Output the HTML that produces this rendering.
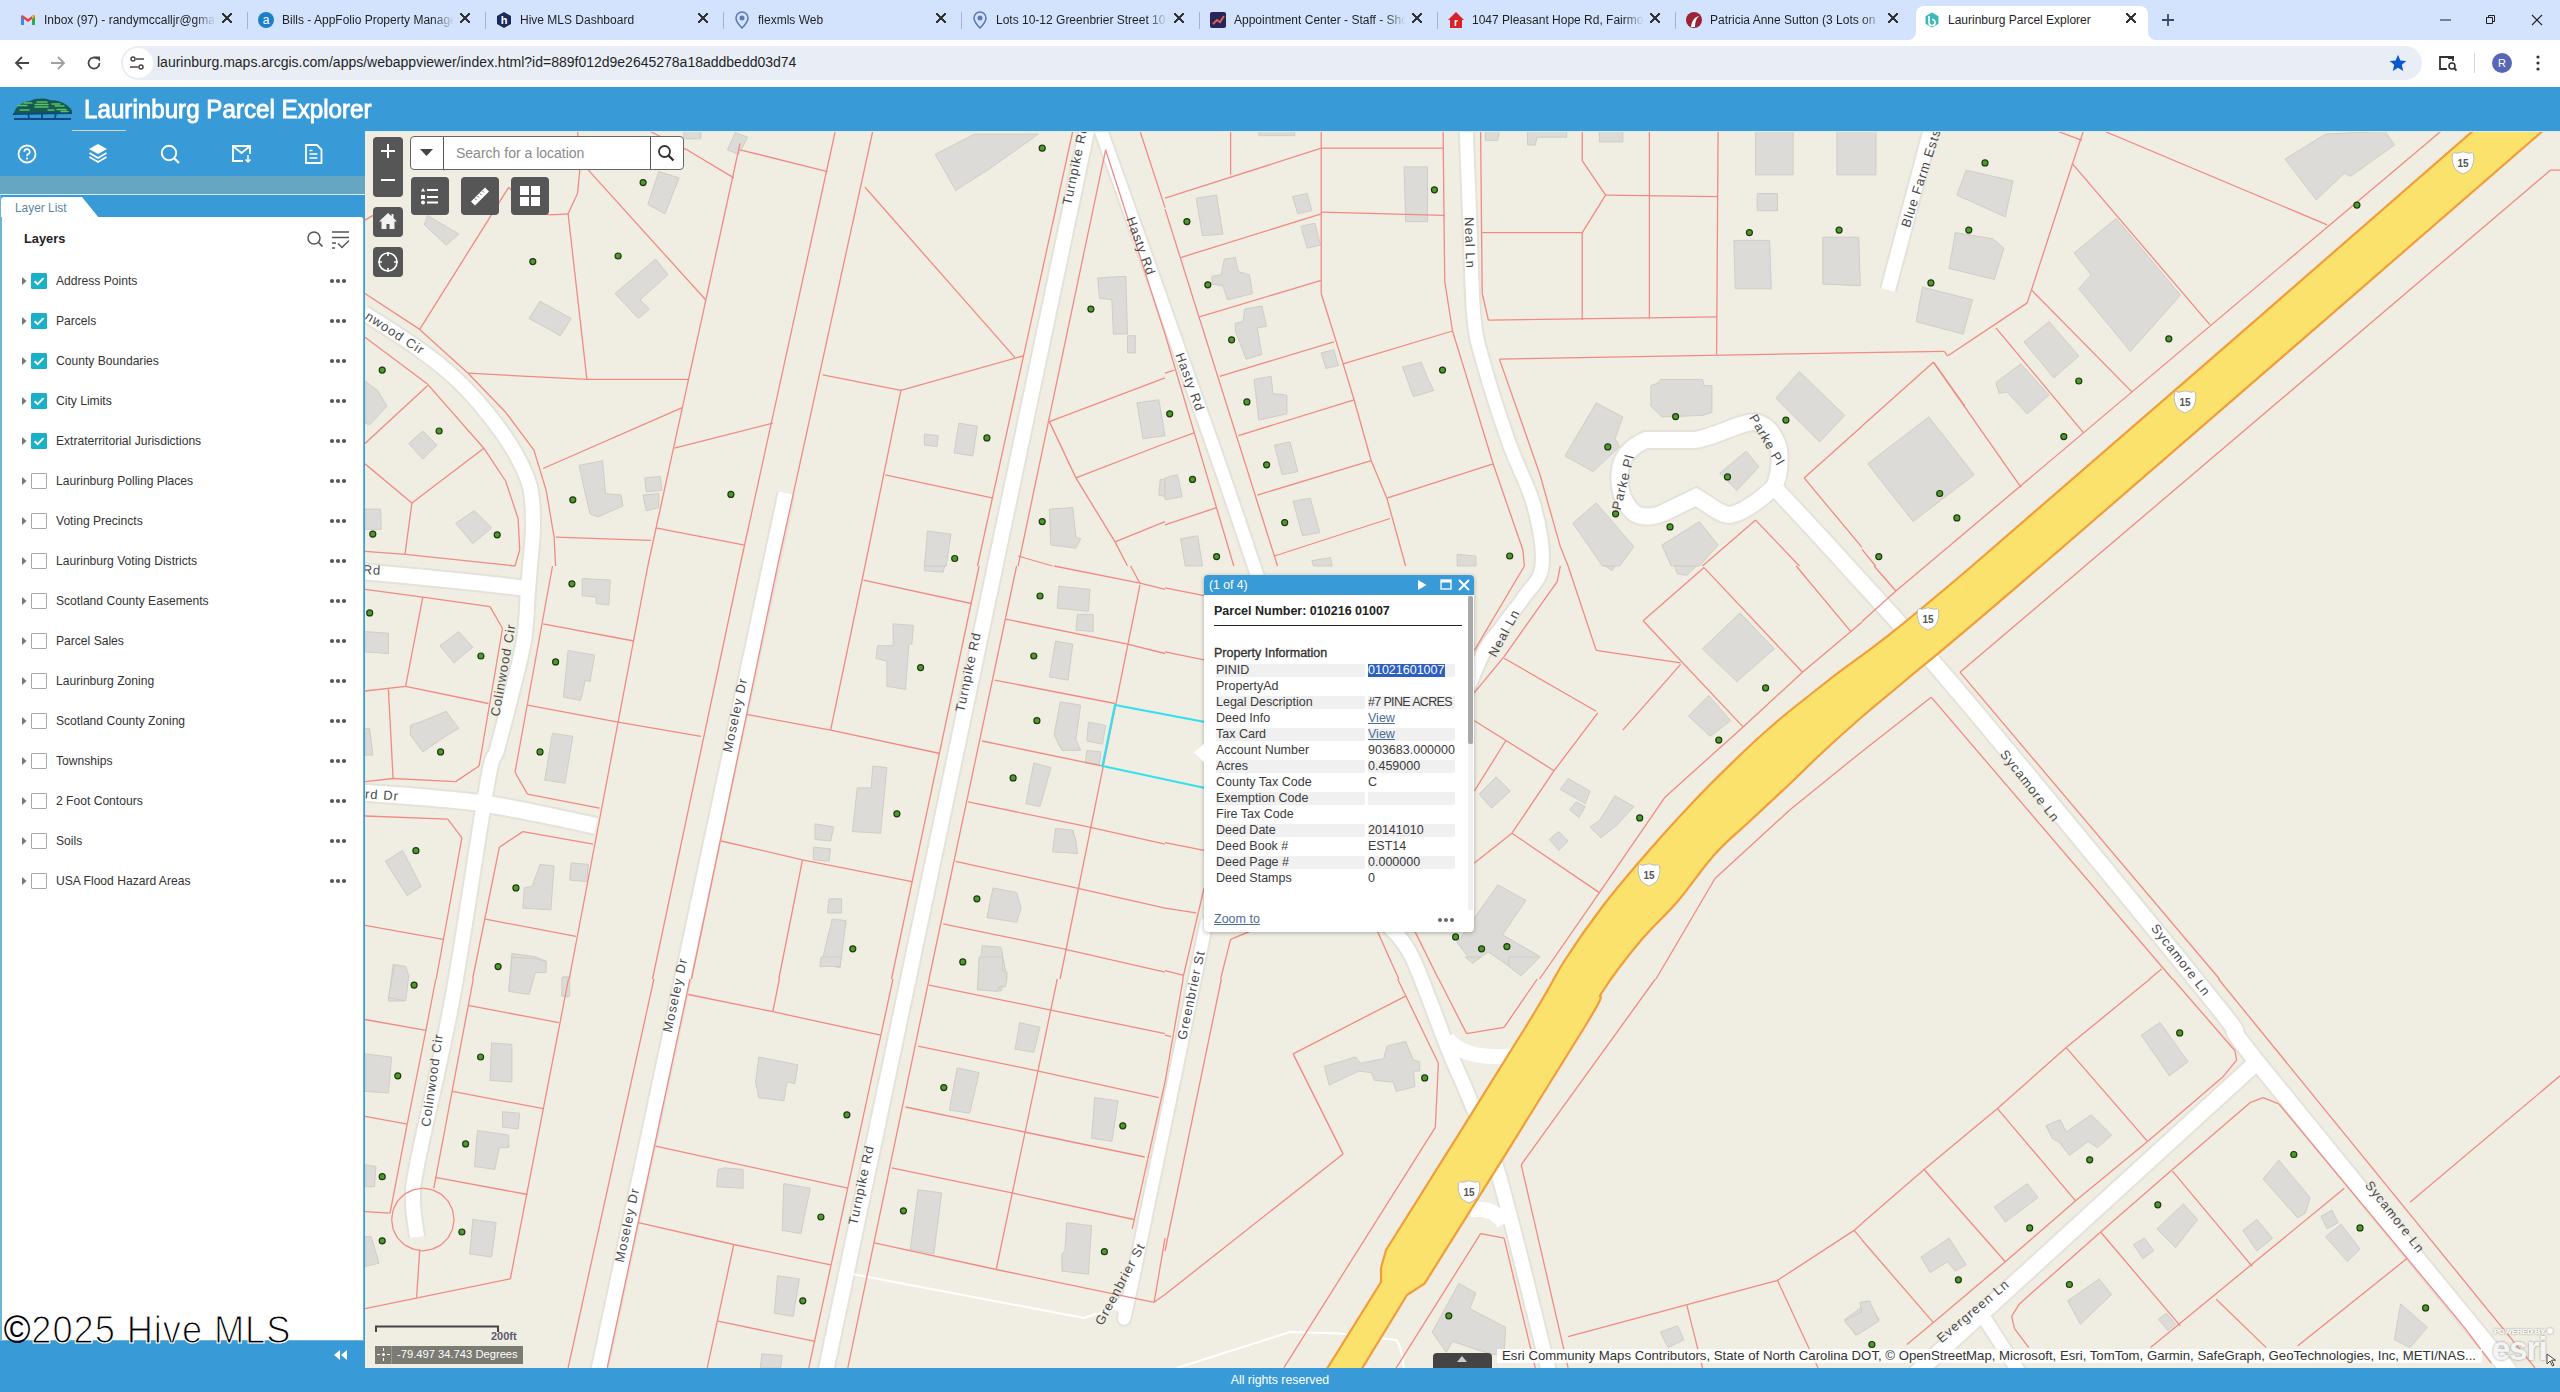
<!DOCTYPE html>
<html><head><meta charset="utf-8"><title>Laurinburg Parcel Explorer</title>
<style>*{box-sizing:border-box;margin:0;padding:0}
html,body{width:2560px;height:1392px;overflow:hidden;background:#fff;font-family:"Liberation Sans",sans-serif}
.abs{position:absolute}
.tabt{font-size:12px;color:#1f1f1f;white-space:nowrap;overflow:hidden;-webkit-mask-image:linear-gradient(90deg,#000 88%,transparent)}
.tabx{width:10px;height:10px;background:linear-gradient(45deg,transparent 44%,#333 44%,#333 56%,transparent 56%),linear-gradient(-45deg,transparent 44%,#333 44%,#333 56%,transparent 56%)}
.lyr{font-size:12.1px;color:#333;white-space:nowrap;line-height:16px}
.prow{font-size:12.5px;color:#3a3a3a;white-space:nowrap;line-height:15px}
</style></head><body>
<div class="abs" style="left:0;top:0;width:2560px;height:40px;background:#d3e3fd"></div>
<svg class="abs" style="left:20px;top:12px" width="16" height="16" viewBox="0 0 16 16"><path d="M1 4v9h3V7l4 3 4-3v6h3V4l-1.5-1L8 7 2.5 3z" fill="#ea4335"/><path d="M1 4v9h3V7z" fill="#4285f4"/><path d="M12 7v6h3V4z" fill="#34a853"/><path d="M15 4l-3 3V3.5z" fill="#fbbc04"/></svg>
<div class="abs tabt" style="left:44px;top:13px;width:172px">Inbox (97) - randymccalljr@gmail.com</div>
<div class="abs tabx" style="left:222px;top:13px"></div>
<div class="abs" style="left:247px;top:12px;width:1px;height:17px;background:#a5b5cf"></div>
<svg class="abs" style="left:258px;top:12px" width="16" height="16"><circle cx="8" cy="8" r="8" fill="#1e7fc8"/><text x="8" y="12" font-size="12" text-anchor="middle" fill="#fff" font-family="Liberation Sans">a</text></svg>
<div class="abs tabt" style="left:282px;top:13px;width:172px">Bills - AppFolio Property Manager</div>
<div class="abs tabx" style="left:460px;top:13px"></div>
<div class="abs" style="left:485px;top:12px;width:1px;height:17px;background:#a5b5cf"></div>
<svg class="abs" style="left:496px;top:12px" width="16" height="16"><path d="M8 0l7 4v8l-7 4-7-4V4z" fill="#1a2a5c"/><text x="8" y="12" font-size="11" font-weight="bold" text-anchor="middle" fill="#fff" font-family="Liberation Sans">h</text></svg>
<div class="abs tabt" style="left:520px;top:13px;width:172px">Hive MLS Dashboard</div>
<div class="abs tabx" style="left:698px;top:13px"></div>
<div class="abs" style="left:723px;top:12px;width:1px;height:17px;background:#a5b5cf"></div>
<svg class="abs" style="left:734px;top:11px" width="16" height="18"><path d="M8 1a6 6 0 0 1 6 6c0 4-6 10-6 10S2 11 2 7a6 6 0 0 1 6-6z" fill="none" stroke="#5b7bb5" stroke-width="1.6"/><circle cx="8" cy="7" r="2.5" fill="#5b7bb5"/></svg>
<div class="abs tabt" style="left:758px;top:13px;width:172px">flexmls Web</div>
<div class="abs tabx" style="left:936px;top:13px"></div>
<div class="abs" style="left:961px;top:12px;width:1px;height:17px;background:#a5b5cf"></div>
<svg class="abs" style="left:972px;top:11px" width="16" height="18"><path d="M8 1a6 6 0 0 1 6 6c0 4-6 10-6 10S2 11 2 7a6 6 0 0 1 6-6z" fill="none" stroke="#5b7bb5" stroke-width="1.6"/><circle cx="8" cy="7" r="2.5" fill="#5b7bb5"/></svg>
<div class="abs tabt" style="left:996px;top:13px;width:172px">Lots 10-12 Greenbrier Street 10</div>
<div class="abs tabx" style="left:1174px;top:13px"></div>
<div class="abs" style="left:1199px;top:12px;width:1px;height:17px;background:#a5b5cf"></div>
<svg class="abs" style="left:1210px;top:12px" width="16" height="16"><rect width="16" height="16" rx="2" fill="#26265a"/><path d="M3 12l4-4 3 2 4-6" stroke="#e0604a" stroke-width="2" fill="none"/></svg>
<div class="abs tabt" style="left:1234px;top:13px;width:172px">Appointment Center - Staff - ShowingTime</div>
<div class="abs tabx" style="left:1412px;top:13px"></div>
<div class="abs" style="left:1437px;top:12px;width:1px;height:17px;background:#a5b5cf"></div>
<svg class="abs" style="left:1448px;top:12px" width="16" height="16"><path d="M8 0L0 8h2v8h12V8h2z" fill="#d92228"/><text x="8" y="14" font-size="10" font-weight="bold" text-anchor="middle" fill="#fff" font-family="Liberation Sans">r</text></svg>
<div class="abs tabt" style="left:1472px;top:13px;width:172px">1047 Pleasant Hope Rd, Fairmont</div>
<div class="abs tabx" style="left:1650px;top:13px"></div>
<div class="abs" style="left:1675px;top:12px;width:1px;height:17px;background:#a5b5cf"></div>
<svg class="abs" style="left:1686px;top:12px" width="16" height="16"><circle cx="8" cy="8" r="8" fill="#9b2335"/><path d="M5 15 C6 8 9 5 13 4 C10 7 9 10 9 15z" fill="#fff"/></svg>
<div class="abs tabt" style="left:1710px;top:13px;width:172px">Patricia Anne Sutton (3 Lots on</div>
<div class="abs tabx" style="left:1888px;top:13px"></div>
<div class="abs" style="left:1916px;top:6px;width:232px;height:40px;background:#fff;border-radius:8px 8px 0 0"></div>
<svg class="abs" style="left:1908px;top:32px" width="8" height="8"><path d="M8 0v8H0a8 8 0 0 0 8-8z" fill="#fff"/></svg>
<svg class="abs" style="left:2148px;top:32px" width="8" height="8"><path d="M0 0v8h8a8 8 0 0 1-8-8z" fill="#fff"/></svg>
<svg class="abs" style="left:1924px;top:12px" width="16" height="16"><path d="M8 0.5l6.5 3.75v7.5L8 15.5 1.5 11.75v-7.5z" fill="#3fb8b8"/><path d="M5 4v6.5a3 3 0 1 0 3-3" stroke="#fff" stroke-width="1.6" fill="none"/></svg>
<div class="abs tabt" style="left:1948px;top:13px;width:170px;-webkit-mask-image:none">Laurinburg Parcel Explorer</div>
<div class="abs tabx" style="left:2126px;top:13px"></div>
<svg class="abs" style="left:2161px;top:13px" width="14" height="14"><path d="M7 1v12M1 7h12" stroke="#3c4a5e" stroke-width="1.8"/></svg>
<svg class="abs" style="left:2440px;top:19px" width="12" height="2"><path d="M0 1h11" stroke="#1f1f1f" stroke-width="1"/></svg>
<svg class="abs" style="left:2484px;top:14px" width="12" height="12"><path d="M2.5 3.5h6v6h-6z M4.5 3.5v-2h6v6h-2" stroke="#1f1f1f" stroke-width="1" fill="none"/></svg>
<svg class="abs" style="left:2531px;top:14px" width="12" height="12"><path d="M1 1l10 10M11 1L1 11" stroke="#1f1f1f" stroke-width="1.1"/></svg>
<div class="abs" style="left:0;top:40px;width:2560px;height:47px;background:#fff"></div>
<div class="abs" style="left:121px;top:46px;width:2301px;height:34px;border-radius:17px;background:#e9eef6"></div>
<div class="abs" style="left:123px;top:48px;width:30px;height:30px;border-radius:15px;background:#fff"></div>
<svg class="abs" style="left:14px;top:55px" width="16" height="16"><path d="M15 8H2M8 2L2 8l6 6" stroke="#474747" stroke-width="1.8" fill="none"/></svg>
<svg class="abs" style="left:50px;top:55px" width="16" height="16"><path d="M1 8h13M8 2l6 6-6 6" stroke="#a0a0a0" stroke-width="1.8" fill="none"/></svg>
<svg class="abs" style="left:86px;top:55px" width="16" height="16"><path d="M13.5 8A5.5 5.5 0 1 1 11.5 3.8" stroke="#474747" stroke-width="1.8" fill="none"/><path d="M9 1.5h5v5z" fill="#474747"/></svg>
<svg class="abs" style="left:129px;top:55px" width="16" height="16"><circle cx="4" cy="4" r="2" stroke="#474747" stroke-width="1.5" fill="none"/><path d="M7 4h8M1 12h8" stroke="#474747" stroke-width="1.6"/><circle cx="12" cy="12" r="2" stroke="#474747" stroke-width="1.5" fill="none"/></svg>
<div class="abs" style="left:157px;top:54px;font-size:14px;color:#1f1f1f;white-space:nowrap">laurinburg.maps.arcgis.com/apps/webappviewer/index.html?id=889f012d9e2645278a18addbedd03d74</div>
<svg class="abs" style="left:2388px;top:53px" width="20" height="20" viewBox="0 0 24 24"><path d="M12 2l2.9 6.9 7.1.6-5.4 4.7 1.7 7.3L12 17.6 5.7 21.5l1.7-7.3L2 9.5l7.1-.6z" fill="#0b57d0"/></svg>
<svg class="abs" style="left:2438px;top:54px" width="20" height="18"><path d="M9 15H2V3h13v4" stroke="#333" stroke-width="1.8" fill="none"/><rect x="10" y="2" width="6" height="3" fill="#333"/><circle cx="14" cy="12" r="3" stroke="#333" stroke-width="1.6" fill="none"/><path d="M16 14l2.5 2.5" stroke="#333" stroke-width="1.8"/></svg>
<div class="abs" style="left:2474px;top:53px;width:1px;height:20px;background:#d0d7e2"></div>
<div class="abs" style="left:2492px;top:53px;width:20px;height:20px;border-radius:10px;background:#5866b8;color:#fff;font-size:11px;text-align:center;line-height:20px">R</div>
<svg class="abs" style="left:2535px;top:54px" width="6" height="18"><circle cx="3" cy="3" r="1.6" fill="#333"/><circle cx="3" cy="9" r="1.6" fill="#333"/><circle cx="3" cy="15" r="1.6" fill="#333"/></svg>
<div class="abs" style="left:0;top:87px;width:2560px;height:44px;background:#389ad6"></div>
<svg class="abs" style="left:8px;top:94px" width="70" height="30" viewBox="0 0 70 30">
<path d="M6 19 C8 12 14 8 22 7 C28 4 36 4 42 6 C50 6 58 9 62 14 C64 16 65 18 63 19 Z" fill="#145a52"/>
<path d="M5 20 L64 19" stroke="#0e4a7a" stroke-width="2.2"/>
<path d="M20 19 L21 24 M34 19 L34 24 M48 19 L47 24" stroke="#0e4a7a" stroke-width="1.8"/>
<path d="M6 25 L63 25" stroke="#0c4a80" stroke-width="2"/>
<path d="M10 11.5 h9 M16 9 h8 M29 8 h10 M27 10.5 h13 M27 13 h13 M44 10 h8 M47 12 h9 M12 16 h9 M40 16 h6 M49 15.5 h9 M53 17.5 h7" stroke="#5cc064" stroke-width="1.4" stroke-linecap="round"/>
</svg>
<div class="abs" style="left:84px;top:94px;font-size:26px;color:#fff;white-space:nowrap;transform:scaleX(0.93);transform-origin:0 0;-webkit-text-stroke:0.9px #fff">Laurinburg Parcel Explorer</div>
<div class="abs" style="left:72px;top:130px;width:54px;height:1px;background:#d9d4b0"></div>
<div class="abs" style="left:0;top:131px;width:365px;height:1237px;background:#389ad6"></div>
<svg class="abs" style="left:17px;top:144px" width="20" height="20"><circle cx="10" cy="10" r="8.5" stroke="#fff" stroke-width="1.8" fill="none"/><path d="M7.3 7.8a2.7 2.7 0 1 1 3.6 2.5c-.6.3-.9.7-.9 1.4v.6" stroke="#fff" stroke-width="1.7" fill="none"/><circle cx="10" cy="14.6" r="1.1" fill="#fff"/></svg>
<svg class="abs" style="left:88px;top:143px" width="20" height="22"><path d="M10 1L19 6 10 11 1 6z" fill="#fff"/><path d="M1.5 10L10 15l8.5-5M1.5 14L10 19l8.5-5" stroke="#fff" stroke-width="1.8" fill="none"/></svg>
<svg class="abs" style="left:160px;top:144px" width="22" height="22"><circle cx="9" cy="9" r="7.2" stroke="#fff" stroke-width="1.9" fill="none"/><path d="M14 14l5 5" stroke="#fff" stroke-width="2.2"/></svg>
<svg class="abs" style="left:232px;top:145px" width="22" height="19"><path d="M18 9V1H1v15h10" stroke="#fff" stroke-width="1.8" fill="none"/><path d="M1.5 1.5L9.5 8l8-6.5" stroke="#fff" stroke-width="1.8" fill="none"/><path d="M16 10v7M13.5 14.5L16 17l2.5-2.5" stroke="#fff" stroke-width="1.5" fill="none"/></svg>
<svg class="abs" style="left:305px;top:144px" width="18" height="20"><path d="M1 1h11l4.5 4.5V19H1z" stroke="#fff" stroke-width="1.8" fill="none"/><path d="M4.5 10h8M4.5 14h8M4.5 6.5h3" stroke="#fff" stroke-width="1.6"/></svg>
<div class="abs" style="left:0;top:176px;width:365px;height:18px;background:#66a6c3"></div>
<div class="abs" style="left:0;top:194px;width:365px;height:1px;background:#d8f0fa"></div>
<div class="abs" style="left:1px;top:195px;width:363px;height:22px;background:#389ad6"></div>
<svg class="abs" style="left:1px;top:196px" width="110" height="22"><path d="M0 4a3 3 0 0 1 3-3h78l17 21H0z" fill="#fff"/></svg>
<div class="abs" style="left:15px;top:201px;font-size:11.9px;color:#5a86a6;white-space:nowrap">Layer List</div>
<div class="abs" style="left:1px;top:217px;width:363px;height:1124px;background:#fff;border-left:1px solid #6bb5d6;border-right:1px solid #6bb5d6;border-bottom:1px solid #6bb5d6;border-radius:0 3px 0 0"></div>
<div class="abs" style="left:0;top:195px;width:1px;height:1146px;background:#6bb5d6"></div>
<div class="abs" style="left:24px;top:231px;font-size:12.8px;font-weight:bold;color:#222;white-space:nowrap">Layers</div>
<svg class="abs" style="left:306px;top:230px" width="20" height="20"><circle cx="8" cy="8" r="6" stroke="#555" stroke-width="1.5" fill="none"/><path d="M12.5 12.5l4 4" stroke="#555" stroke-width="1.7"/></svg>
<svg class="abs" style="left:331px;top:230px" width="20" height="20"><path d="M1 2h17M1 7.5h17M1 13h4M1 18h3" stroke="#555" stroke-width="1.4"/><path d="M7 13.5l4 4 7-7" stroke="#555" stroke-width="1.5" fill="none"/></svg>
<svg class="abs" style="left:22px;top:277px" width="5" height="8"><path d="M0 0l4.5 4L0 8z" fill="#777"/></svg>
<svg class="abs" style="left:31px;top:273px" width="16" height="16"><rect width="16" height="16" rx="1.5" fill="#1ab0c9"/><path d="M3.5 8.2l3.2 3 5.8-6" stroke="#fff" stroke-width="1.9" fill="none"/></svg>
<div class="abs lyr" style="left:56px;top:273px">Address Points</div>
<svg class="abs" style="left:329px;top:278px" width="18" height="6"><circle cx="3" cy="3" r="2.1" fill="#555"/><circle cx="9" cy="3" r="2.1" fill="#555"/><circle cx="15" cy="3" r="2.1" fill="#555"/></svg>
<svg class="abs" style="left:22px;top:317px" width="5" height="8"><path d="M0 0l4.5 4L0 8z" fill="#777"/></svg>
<svg class="abs" style="left:31px;top:313px" width="16" height="16"><rect width="16" height="16" rx="1.5" fill="#1ab0c9"/><path d="M3.5 8.2l3.2 3 5.8-6" stroke="#fff" stroke-width="1.9" fill="none"/></svg>
<div class="abs lyr" style="left:56px;top:313px">Parcels</div>
<svg class="abs" style="left:329px;top:318px" width="18" height="6"><circle cx="3" cy="3" r="2.1" fill="#555"/><circle cx="9" cy="3" r="2.1" fill="#555"/><circle cx="15" cy="3" r="2.1" fill="#555"/></svg>
<svg class="abs" style="left:22px;top:357px" width="5" height="8"><path d="M0 0l4.5 4L0 8z" fill="#777"/></svg>
<svg class="abs" style="left:31px;top:353px" width="16" height="16"><rect width="16" height="16" rx="1.5" fill="#1ab0c9"/><path d="M3.5 8.2l3.2 3 5.8-6" stroke="#fff" stroke-width="1.9" fill="none"/></svg>
<div class="abs lyr" style="left:56px;top:353px">County Boundaries</div>
<svg class="abs" style="left:329px;top:358px" width="18" height="6"><circle cx="3" cy="3" r="2.1" fill="#555"/><circle cx="9" cy="3" r="2.1" fill="#555"/><circle cx="15" cy="3" r="2.1" fill="#555"/></svg>
<svg class="abs" style="left:22px;top:397px" width="5" height="8"><path d="M0 0l4.5 4L0 8z" fill="#777"/></svg>
<svg class="abs" style="left:31px;top:393px" width="16" height="16"><rect width="16" height="16" rx="1.5" fill="#1ab0c9"/><path d="M3.5 8.2l3.2 3 5.8-6" stroke="#fff" stroke-width="1.9" fill="none"/></svg>
<div class="abs lyr" style="left:56px;top:393px">City Limits</div>
<svg class="abs" style="left:329px;top:398px" width="18" height="6"><circle cx="3" cy="3" r="2.1" fill="#555"/><circle cx="9" cy="3" r="2.1" fill="#555"/><circle cx="15" cy="3" r="2.1" fill="#555"/></svg>
<svg class="abs" style="left:22px;top:437px" width="5" height="8"><path d="M0 0l4.5 4L0 8z" fill="#777"/></svg>
<svg class="abs" style="left:31px;top:433px" width="16" height="16"><rect width="16" height="16" rx="1.5" fill="#1ab0c9"/><path d="M3.5 8.2l3.2 3 5.8-6" stroke="#fff" stroke-width="1.9" fill="none"/></svg>
<div class="abs lyr" style="left:56px;top:433px">Extraterritorial Jurisdictions</div>
<svg class="abs" style="left:329px;top:438px" width="18" height="6"><circle cx="3" cy="3" r="2.1" fill="#555"/><circle cx="9" cy="3" r="2.1" fill="#555"/><circle cx="15" cy="3" r="2.1" fill="#555"/></svg>
<svg class="abs" style="left:22px;top:477px" width="5" height="8"><path d="M0 0l4.5 4L0 8z" fill="#777"/></svg>
<div class="abs" style="left:31px;top:473px;width:16px;height:16px;border:1px solid #a8a8a8;border-radius:1px;background:#fff"></div>
<div class="abs lyr" style="left:56px;top:473px">Laurinburg Polling Places</div>
<svg class="abs" style="left:329px;top:478px" width="18" height="6"><circle cx="3" cy="3" r="2.1" fill="#555"/><circle cx="9" cy="3" r="2.1" fill="#555"/><circle cx="15" cy="3" r="2.1" fill="#555"/></svg>
<svg class="abs" style="left:22px;top:517px" width="5" height="8"><path d="M0 0l4.5 4L0 8z" fill="#777"/></svg>
<div class="abs" style="left:31px;top:513px;width:16px;height:16px;border:1px solid #a8a8a8;border-radius:1px;background:#fff"></div>
<div class="abs lyr" style="left:56px;top:513px">Voting Precincts</div>
<svg class="abs" style="left:329px;top:518px" width="18" height="6"><circle cx="3" cy="3" r="2.1" fill="#555"/><circle cx="9" cy="3" r="2.1" fill="#555"/><circle cx="15" cy="3" r="2.1" fill="#555"/></svg>
<svg class="abs" style="left:22px;top:557px" width="5" height="8"><path d="M0 0l4.5 4L0 8z" fill="#777"/></svg>
<div class="abs" style="left:31px;top:553px;width:16px;height:16px;border:1px solid #a8a8a8;border-radius:1px;background:#fff"></div>
<div class="abs lyr" style="left:56px;top:553px">Laurinburg Voting Districts</div>
<svg class="abs" style="left:329px;top:558px" width="18" height="6"><circle cx="3" cy="3" r="2.1" fill="#555"/><circle cx="9" cy="3" r="2.1" fill="#555"/><circle cx="15" cy="3" r="2.1" fill="#555"/></svg>
<svg class="abs" style="left:22px;top:597px" width="5" height="8"><path d="M0 0l4.5 4L0 8z" fill="#777"/></svg>
<div class="abs" style="left:31px;top:593px;width:16px;height:16px;border:1px solid #a8a8a8;border-radius:1px;background:#fff"></div>
<div class="abs lyr" style="left:56px;top:593px">Scotland County Easements</div>
<svg class="abs" style="left:329px;top:598px" width="18" height="6"><circle cx="3" cy="3" r="2.1" fill="#555"/><circle cx="9" cy="3" r="2.1" fill="#555"/><circle cx="15" cy="3" r="2.1" fill="#555"/></svg>
<svg class="abs" style="left:22px;top:637px" width="5" height="8"><path d="M0 0l4.5 4L0 8z" fill="#777"/></svg>
<div class="abs" style="left:31px;top:633px;width:16px;height:16px;border:1px solid #a8a8a8;border-radius:1px;background:#fff"></div>
<div class="abs lyr" style="left:56px;top:633px">Parcel Sales</div>
<svg class="abs" style="left:329px;top:638px" width="18" height="6"><circle cx="3" cy="3" r="2.1" fill="#555"/><circle cx="9" cy="3" r="2.1" fill="#555"/><circle cx="15" cy="3" r="2.1" fill="#555"/></svg>
<svg class="abs" style="left:22px;top:677px" width="5" height="8"><path d="M0 0l4.5 4L0 8z" fill="#777"/></svg>
<div class="abs" style="left:31px;top:673px;width:16px;height:16px;border:1px solid #a8a8a8;border-radius:1px;background:#fff"></div>
<div class="abs lyr" style="left:56px;top:673px">Laurinburg Zoning</div>
<svg class="abs" style="left:329px;top:678px" width="18" height="6"><circle cx="3" cy="3" r="2.1" fill="#555"/><circle cx="9" cy="3" r="2.1" fill="#555"/><circle cx="15" cy="3" r="2.1" fill="#555"/></svg>
<svg class="abs" style="left:22px;top:717px" width="5" height="8"><path d="M0 0l4.5 4L0 8z" fill="#777"/></svg>
<div class="abs" style="left:31px;top:713px;width:16px;height:16px;border:1px solid #a8a8a8;border-radius:1px;background:#fff"></div>
<div class="abs lyr" style="left:56px;top:713px">Scotland County Zoning</div>
<svg class="abs" style="left:329px;top:718px" width="18" height="6"><circle cx="3" cy="3" r="2.1" fill="#555"/><circle cx="9" cy="3" r="2.1" fill="#555"/><circle cx="15" cy="3" r="2.1" fill="#555"/></svg>
<svg class="abs" style="left:22px;top:757px" width="5" height="8"><path d="M0 0l4.5 4L0 8z" fill="#777"/></svg>
<div class="abs" style="left:31px;top:753px;width:16px;height:16px;border:1px solid #a8a8a8;border-radius:1px;background:#fff"></div>
<div class="abs lyr" style="left:56px;top:753px">Townships</div>
<svg class="abs" style="left:329px;top:758px" width="18" height="6"><circle cx="3" cy="3" r="2.1" fill="#555"/><circle cx="9" cy="3" r="2.1" fill="#555"/><circle cx="15" cy="3" r="2.1" fill="#555"/></svg>
<svg class="abs" style="left:22px;top:797px" width="5" height="8"><path d="M0 0l4.5 4L0 8z" fill="#777"/></svg>
<div class="abs" style="left:31px;top:793px;width:16px;height:16px;border:1px solid #a8a8a8;border-radius:1px;background:#fff"></div>
<div class="abs lyr" style="left:56px;top:793px">2 Foot Contours</div>
<svg class="abs" style="left:329px;top:798px" width="18" height="6"><circle cx="3" cy="3" r="2.1" fill="#555"/><circle cx="9" cy="3" r="2.1" fill="#555"/><circle cx="15" cy="3" r="2.1" fill="#555"/></svg>
<svg class="abs" style="left:22px;top:837px" width="5" height="8"><path d="M0 0l4.5 4L0 8z" fill="#777"/></svg>
<div class="abs" style="left:31px;top:833px;width:16px;height:16px;border:1px solid #a8a8a8;border-radius:1px;background:#fff"></div>
<div class="abs lyr" style="left:56px;top:833px">Soils</div>
<svg class="abs" style="left:329px;top:838px" width="18" height="6"><circle cx="3" cy="3" r="2.1" fill="#555"/><circle cx="9" cy="3" r="2.1" fill="#555"/><circle cx="15" cy="3" r="2.1" fill="#555"/></svg>
<svg class="abs" style="left:22px;top:877px" width="5" height="8"><path d="M0 0l4.5 4L0 8z" fill="#777"/></svg>
<div class="abs" style="left:31px;top:873px;width:16px;height:16px;border:1px solid #a8a8a8;border-radius:1px;background:#fff"></div>
<div class="abs lyr" style="left:56px;top:873px">USA Flood Hazard Areas</div>
<svg class="abs" style="left:329px;top:878px" width="18" height="6"><circle cx="3" cy="3" r="2.1" fill="#555"/><circle cx="9" cy="3" r="2.1" fill="#555"/><circle cx="15" cy="3" r="2.1" fill="#555"/></svg>
<svg class="abs" style="left:334px;top:1350px" width="14" height="10"><path d="M6 0v10L0 5zM13 0v10L7 5z" fill="#fff"/></svg>
<svg class="abs" style="left:0;top:1300px" width="300" height="50"><text x="4" y="43" font-family="Liberation Sans" font-size="39" letter-spacing="1" transform="scale(0.93 1)" fill="#000">&#169;</text><text x="4" y="43" font-family="Liberation Sans" font-size="39" letter-spacing="1" transform="scale(0.93 1)" fill="#000" stroke="#fff" stroke-width="1.2" paint-order="fill"><tspan fill="none" stroke="none">&#169;</tspan>2025 Hive MLS</text></svg>
<svg class="abs" style="left:365px;top:131px" width="2195" height="1237" viewBox="365 131 2195 1237">
<rect x="365" y="131" width="2195" height="1237" fill="#f0eee2"/>
<g fill="#dcdbd7" stroke="#cfcdc8" stroke-width="1">
<path d="M935.3 154.4 L974.4 134.1 L1038.4 134.1 L990.0 168.5 L955.6 190.4 Z"/>
<path d="M647.8 204.4 L658.8 171.6 L679.1 177.9 L665.0 213.8 Z"/>
<path d="M615.0 293.5 L655.6 259.1 L668.1 274.8 L640.0 299.8 L649.4 309.1 L638.4 318.5 Z"/>
<path d="M529.1 318.5 L540.0 301.3 L571.2 318.5 L560.3 335.7 Z"/>
<path d="M427.5 215.4 L458.8 234.1 L446.2 245.1 L424.4 224.8 Z"/>
<path d="M1097.8 277.9 L1125.9 276.3 L1127.5 334.1 L1113.4 334.1 L1111.9 299.8 L1099.4 298.2 Z"/>
<path d="M1127.5 335.7 L1135.3 335.7 L1135.3 352.9 L1127.5 352.9 Z"/>
<path d="M1136.9 402.9 L1158.8 399.8 L1165.0 435.7 L1143.1 438.8 Z"/>
<path d="M924.4 434.1 L938.4 435.7 L936.9 446.6 L924.4 445.1 Z"/>
<path d="M958.8 423.2 L977.5 426.3 L972.8 456.0 L954.1 452.9 Z"/>
<path d="M579.1 465.4 L602.5 460.7 L605.6 493.5 L621.2 495.1 L622.8 506.0 L597.8 516.9 L590.0 513.8 L583.8 487.2 Z"/>
<path d="M644.7 477.9 L660.3 476.3 L661.9 490.4 L646.2 491.9 Z"/>
<path d="M643.1 495.1 L658.8 493.5 L658.8 507.6 L646.2 510.7 Z"/>
<path d="M408.8 443.5 L422.8 431.0 L436.9 445.1 L422.8 459.1 Z"/>
<path d="M365.0 381.0 L377.5 390.4 L386.9 406.0 L369.7 424.8 L365.0 423.2 Z"/>
<path d="M455.6 523.2 L474.4 510.7 L491.6 527.9 L472.8 543.5 Z"/>
<path d="M365.0 509.1 L380.6 509.1 L381.2 529.4 L365.0 529.4 Z"/>
<path d="M1049.4 509.1 L1072.8 507.6 L1075.9 537.2 L1080.6 538.8 L1075.9 548.2 L1050.9 545.1 Z"/>
<path d="M927.5 531.0 L950.9 534.1 L946.2 566.0 L924.4 566.0 Z"/>
<path d="M1160.3 479.4 L1165.0 479.4 L1165.0 496.6 L1158.8 495.1 Z"/>
<path d="M727.5 149.8 L735.3 132.6 L747.8 137.2 L738.4 154.4 Z"/>
<path d="M683.8 131.0 L700.9 131.0 L700.9 138.8 L683.8 138.8 Z"/>
<path d="M1404.1 166.9 L1427.5 166.9 L1427.5 221.6 L1405.6 221.6 Z"/>
<path d="M1196.2 198.2 L1216.6 195.1 L1222.8 234.1 L1202.5 235.7 Z"/>
<path d="M1292.5 196.6 L1307.2 193.5 L1311.9 210.7 L1297.8 213.8 Z"/>
<path d="M1300.9 226.3 L1315.0 223.2 L1320.6 245.1 L1307.2 248.2 Z"/>
<path d="M1211.9 276.3 L1221.2 274.8 L1224.4 259.1 L1235.3 257.6 L1238.4 271.6 L1249.4 274.8 L1252.5 293.5 L1227.5 299.8 L1222.8 285.7 L1211.9 284.1 Z"/>
<path d="M1235.3 323.2 L1243.1 321.6 L1244.7 309.1 L1261.9 306.0 L1266.6 326.3 L1257.2 327.9 L1261.9 354.4 L1246.2 359.1 L1240.0 343.5 L1235.3 331.0 Z"/>
<path d="M1321.2 352.9 L1333.8 349.8 L1338.4 365.4 L1325.9 368.5 Z"/>
<path d="M1402.5 366.9 L1421.2 362.2 L1427.5 377.9 L1433.8 390.4 L1413.4 396.6 Z"/>
<path d="M1254.1 379.4 L1271.2 376.3 L1272.8 393.5 L1286.9 395.1 L1286.9 413.8 L1258.8 420.1 Z"/>
<path d="M1274.4 445.1 L1290.0 441.9 L1297.8 471.6 L1282.2 474.8 Z"/>
<path d="M1165.0 477.9 L1177.5 474.8 L1182.2 496.6 L1165.0 499.8 Z"/>
<path d="M1293.1 501.3 L1310.3 498.2 L1319.7 532.6 L1302.5 535.7 Z"/>
<path d="M1180.6 538.8 L1197.8 535.7 L1202.5 566.0 L1185.3 566.0 Z"/>
<path d="M1311.9 560.7 L1330.6 557.6 L1332.2 566.0 L1313.4 566.0 Z"/>
<path d="M1457.2 554.4 L1475.9 556.0 L1475.9 566.0 L1457.2 566.0 Z"/>
<path d="M1258.8 131.0 L1294.7 131.0 L1294.7 135.7 L1258.8 135.7 Z"/>
<path d="M1485.3 131.0 L1499.4 131.0 L1497.8 140.4 L1485.3 140.4 Z"/>
<path d="M1527.5 131.0 L1566.6 131.0 L1566.6 137.2 L1536.9 137.2 L1535.3 145.1 L1527.5 145.1 Z"/>
<path d="M1599.4 131.0 L1622.8 131.0 L1622.8 141.9 L1599.4 141.9 Z"/>
<path d="M1755.6 131.0 L1793.1 131.0 L1793.1 174.8 L1755.6 174.8 Z"/>
<path d="M1836.9 131.0 L1875.9 131.0 L1875.9 174.8 L1836.9 174.8 Z"/>
<path d="M1757.2 193.5 L1777.5 193.5 L1777.5 210.7 L1757.2 210.7 Z"/>
<path d="M1733.8 240.4 L1769.7 240.4 L1771.2 288.8 L1735.3 288.8 Z"/>
<path d="M1822.8 237.2 L1858.8 237.2 L1860.3 285.7 L1822.8 284.1 Z"/>
<path d="M1650.9 385.7 L1658.8 382.6 L1660.3 379.4 L1702.5 379.4 L1704.1 385.7 L1711.9 385.7 L1711.9 412.2 L1702.5 415.4 L1661.9 416.9 L1650.9 406.0 Z"/>
<path d="M1775.9 398.2 L1799.4 371.6 L1844.7 415.4 L1819.7 441.9 Z"/>
<path d="M1565.0 456.0 L1596.2 402.9 L1622.8 416.9 L1615.0 438.8 L1619.7 446.6 L1593.1 471.6 Z"/>
<path d="M1719.7 473.2 L1746.2 451.3 L1758.8 466.9 L1736.9 490.4 Z"/>
<path d="M1572.8 523.2 L1596.2 502.9 L1633.8 546.6 L1619.7 566.0 L1602.5 566.0 Z"/>
<path d="M1661.9 545.1 L1699.4 521.6 L1718.1 545.1 L1699.4 566.0 L1671.2 566.0 Z"/>
<path d="M2285.0 159.1 L2325.6 134.1 L2385.0 131.0 L2394.4 145.1 L2350.6 176.3 L2344.4 173.2 L2316.2 199.8 Z"/>
<path d="M2074.1 252.9 L2116.2 218.5 L2180.3 295.1 L2144.4 335.7 L2130.3 351.3 L2078.8 288.8 L2091.2 274.8 Z"/>
<path d="M2024.1 341.9 L2049.1 321.6 L2078.8 356.0 L2053.8 377.9 Z"/>
<path d="M1995.9 382.6 L2020.9 363.8 L2049.1 395.1 L2027.2 413.8 L2006.9 391.9 L1999.1 393.5 Z"/>
<path d="M1867.8 463.8 L1928.8 416.9 L1974.1 474.8 L1913.1 521.6 Z"/>
<path d="M1956.9 195.1 L1966.2 170.1 L2013.1 181.0 L2005.3 216.9 Z"/>
<path d="M1949.1 268.5 L1955.3 232.6 L1992.8 238.8 L2003.8 248.2 L1994.4 279.4 Z"/>
<path d="M1916.2 321.6 L1922.5 287.2 L1972.5 299.8 L1963.1 334.1 Z"/>
<path d="M582.2 578.5 L610.3 580.1 L608.8 605.1 L596.2 603.5 L596.2 597.2 L582.2 595.7 Z"/>
<path d="M365.0 631.6 L388.4 633.2 L388.4 653.5 L365.0 651.9 Z"/>
<path d="M440.0 645.7 L458.8 631.6 L472.8 647.2 L454.1 662.9 Z"/>
<path d="M410.3 725.4 L419.7 722.2 L446.2 711.3 L458.8 728.5 L443.1 737.9 L422.8 751.9 L410.3 734.8 Z"/>
<path d="M365.0 728.5 L369.7 728.5 L372.8 755.1 L365.0 755.1 Z"/>
<path d="M568.1 650.4 L594.7 655.1 L590.0 681.6 L585.3 680.1 L580.6 700.4 L563.4 697.2 Z"/>
<path d="M552.5 733.2 L572.8 736.3 L565.0 783.2 L544.7 780.1 Z"/>
<path d="M893.1 623.8 L913.4 625.4 L911.9 644.1 L908.8 644.1 L905.6 689.4 L886.9 686.3 L886.9 661.3 L875.9 658.2 L877.5 645.7 L893.1 645.7 Z"/>
<path d="M872.8 766.0 L886.9 767.6 L880.6 833.2 L852.5 831.6 L857.2 787.9 L871.2 787.9 Z"/>
<path d="M815.0 823.8 L833.8 826.9 L830.6 841.0 L815.0 839.4 Z"/>
<path d="M813.4 847.2 L830.6 848.8 L829.1 861.3 L813.4 859.8 Z"/>
<path d="M829.1 898.8 L841.6 898.8 L841.6 912.9 L827.5 912.9 Z"/>
<path d="M832.2 919.1 L846.2 920.7 L840.0 967.6 L821.2 964.4 Z"/>
<path d="M924.4 566.0 L944.7 566.0 L943.1 572.2 L924.4 570.7 Z"/>
<path d="M1058.8 586.3 L1090.0 589.4 L1088.4 611.3 L1057.2 608.2 Z"/>
<path d="M1077.5 614.4 L1093.1 614.4 L1093.1 631.6 L1075.9 630.1 Z"/>
<path d="M1055.6 641.0 L1072.8 644.1 L1068.1 680.1 L1049.4 676.9 Z"/>
<path d="M1060.3 701.9 L1080.6 705.1 L1075.9 739.4 L1080.6 750.4 L1061.9 750.4 L1054.1 734.8 Z"/>
<path d="M1088.4 722.2 L1105.6 725.4 L1102.5 744.1 L1086.9 741.0 Z"/>
<path d="M1086.9 750.4 L1100.9 751.9 L1099.4 764.4 L1085.3 762.9 Z"/>
<path d="M1033.8 762.9 L1050.9 767.6 L1040.0 806.6 L1025.9 803.5 Z"/>
<path d="M1055.6 828.5 L1072.8 830.1 L1075.9 841.0 L1077.5 853.5 L1052.5 851.9 Z"/>
<path d="M993.1 887.9 L1016.6 892.6 L1021.2 908.2 L1016.6 922.2 L986.9 917.6 Z"/>
<path d="M982.2 945.7 L1000.9 947.2 L1007.2 978.5 L1000.9 991.0 L977.5 989.4 Z"/>
<path d="M385.3 861.3 L402.5 850.4 L421.2 886.3 L407.2 895.7 Z"/>
<path d="M540.0 864.4 L554.1 866.0 L550.9 909.8 L522.8 908.2 L524.4 887.9 L532.2 886.3 Z"/>
<path d="M571.2 862.9 L588.4 864.4 L586.9 881.6 L569.7 880.1 Z"/>
<path d="M511.9 953.5 L535.3 956.6 L546.2 961.3 L544.7 972.2 L529.1 972.2 L525.9 992.6 L508.8 991.0 Z"/>
<path d="M393.1 964.4 L405.6 967.6 L407.2 978.5 L404.1 1001.0 L388.4 1001.0 Z"/>
<path d="M563.4 976.9 L569.7 976.9 L568.1 997.2 L561.9 995.7 Z"/>
<path d="M1702.5 648.8 L1740.0 612.9 L1774.4 648.8 L1736.9 681.6 Z"/>
<path d="M1688.4 716.0 L1708.8 695.7 L1730.6 720.7 L1710.3 736.3 Z"/>
<path d="M1560.3 789.4 L1568.1 778.5 L1590.0 791.0 L1585.3 803.5 Z"/>
<path d="M1569.7 809.8 L1575.9 801.9 L1585.3 806.6 L1579.1 817.6 Z"/>
<path d="M1590.0 826.9 L1599.4 820.7 L1615.0 795.7 L1633.8 806.6 L1616.6 825.4 L1600.9 837.9 Z"/>
<path d="M1549.4 839.4 L1558.8 831.6 L1568.1 841.0 L1558.8 850.4 Z"/>
<path d="M1479.1 794.1 L1496.2 776.9 L1510.3 791.0 L1491.6 808.2 Z"/>
<path d="M1457.2 942.6 L1497.8 884.8 L1525.9 900.4 L1502.5 934.8 L1540.0 956.6 L1521.2 975.4 L1508.8 966.0 L1488.4 951.9 L1472.8 962.9 Z"/>
<path d="M1605.6 566.0 L1615.0 566.0 L1611.9 570.7 Z"/>
<path d="M1674.4 566.0 L1696.2 566.0 L1686.9 575.4 L1677.5 573.8 Z"/>
<path d="M394.7 964.8 L405.6 966.4 L408.8 975.8 L405.6 1000.8 L388.4 997.6 Z"/>
<path d="M511.9 957.0 L535.3 958.6 L546.2 961.7 L546.2 972.6 L535.3 972.6 L529.1 994.5 L508.8 991.4 Z"/>
<path d="M561.9 977.3 L569.7 977.3 L569.7 996.1 L561.9 996.1 Z"/>
<path d="M365.0 1053.9 L391.6 1057.0 L388.4 1092.9 L365.0 1091.4 Z"/>
<path d="M491.6 1042.9 L511.9 1044.5 L511.9 1082.0 L490.0 1080.4 Z"/>
<path d="M502.5 1111.7 L519.7 1113.2 L518.1 1128.9 L502.5 1127.3 Z"/>
<path d="M477.5 1130.4 L508.8 1135.1 L508.8 1147.6 L499.4 1147.6 L494.7 1169.5 L474.4 1166.4 Z"/>
<path d="M365.0 1164.8 L375.9 1166.4 L374.4 1186.7 L365.0 1186.7 Z"/>
<path d="M365.0 1236.7 L371.2 1236.7 L379.1 1263.2 L365.0 1266.4 Z"/>
<path d="M472.8 1219.5 L496.2 1222.6 L491.6 1257.0 L469.7 1253.9 Z"/>
<path d="M758.8 1057.0 L797.8 1064.8 L794.7 1083.6 L786.9 1082.0 L783.8 1100.8 L758.8 1097.6 L755.6 1082.0 Z"/>
<path d="M718.1 1169.5 L724.4 1167.9 L743.1 1169.5 L743.1 1188.2 L716.6 1186.7 Z"/>
<path d="M783.8 1183.6 L810.3 1188.2 L800.9 1233.6 L782.2 1230.4 Z"/>
<path d="M777.5 1275.8 L799.4 1278.9 L793.1 1316.4 L774.4 1313.2 Z"/>
<path d="M761.9 1353.9 L782.2 1355.4 L780.6 1367.9 L760.3 1367.9 Z"/>
<path d="M821.2 957.0 L841.6 957.0 L840.0 966.4 L819.7 966.4 Z"/>
<path d="M979.1 957.0 L1002.5 957.0 L1002.5 971.1 L1007.2 972.6 L1005.6 986.7 L999.4 986.7 L997.8 991.4 L977.5 989.8 Z"/>
<path d="M1019.7 1022.6 L1040.0 1027.3 L1033.8 1052.3 L1015.0 1049.2 Z"/>
<path d="M957.2 1067.9 L979.1 1072.6 L969.7 1113.2 L949.4 1110.1 Z"/>
<path d="M1094.7 1097.6 L1118.1 1100.8 L1111.9 1141.4 L1091.6 1138.2 Z"/>
<path d="M918.1 1189.8 L941.6 1192.9 L933.8 1253.9 L910.3 1249.2 Z"/>
<path d="M1066.6 1222.6 L1091.6 1225.8 L1088.4 1274.2 L1061.9 1271.1 L1061.9 1253.9 L1065.0 1250.8 Z"/>
<path d="M1324.4 1066.4 L1355.6 1057.0 L1360.3 1063.2 L1383.8 1058.6 L1386.9 1046.1 L1405.6 1041.4 L1413.4 1060.1 L1419.7 1061.7 L1419.7 1071.1 L1413.4 1071.1 L1415.0 1086.7 L1396.2 1091.4 L1393.1 1082.0 L1374.4 1080.4 L1371.2 1072.6 L1358.8 1071.1 L1329.1 1085.1 Z"/>
<path d="M1432.2 1332.0 L1458.8 1283.6 L1475.9 1292.9 L1469.7 1308.6 L1505.6 1327.3 L1504.1 1355.4 L1490.0 1353.9 L1452.5 1341.4 L1446.2 1352.3 Z"/>
<path d="M1660.3 1332.0 L1677.5 1325.8 L1683.8 1339.8 L1668.1 1347.6 Z"/>
<path d="M1844.7 1319.5 L1868.1 1302.3 L1879.1 1319.5 L1855.6 1335.1 Z"/>
<path d="M1465.0 957.0 L1480.6 957.0 L1472.8 963.2 Z"/>
<path d="M1508.8 957.0 L1540.0 957.0 L1521.2 975.8 L1508.8 966.4 Z"/>
<path d="M2141.2 1035.1 L2160.0 1022.6 L2188.1 1061.7 L2169.4 1075.8 Z"/>
<path d="M2045.9 1125.8 L2060.0 1119.5 L2066.2 1132.0 L2091.2 1114.8 L2111.6 1135.1 L2097.5 1147.6 L2088.1 1141.4 L2069.4 1155.4 L2060.0 1142.9 L2052.2 1138.2 Z"/>
<path d="M1994.4 1207.0 L2027.2 1183.6 L2038.1 1197.6 L2005.3 1222.0 Z"/>
<path d="M1920.9 1257.0 L1949.1 1238.2 L1966.2 1264.8 L1955.3 1271.1 L1947.5 1261.7 L1930.3 1272.6 Z"/>
<path d="M1844.4 1321.1 L1861.6 1311.7 L1860.0 1302.3 L1869.4 1300.8 L1878.8 1321.1 L1856.9 1335.1 Z"/>
<path d="M2156.9 1228.9 L2183.4 1203.9 L2197.5 1219.5 L2175.6 1247.6 Z"/>
<path d="M2133.4 1244.5 L2144.4 1238.2 L2153.8 1250.8 L2142.8 1258.6 Z"/>
<path d="M2263.1 1178.9 L2278.8 1160.1 L2310.0 1197.6 L2305.3 1213.2 L2297.5 1217.9 Z"/>
<path d="M2242.8 1230.4 L2256.9 1219.5 L2272.5 1238.2 L2256.9 1250.8 Z"/>
<path d="M2320.9 1216.4 L2331.9 1210.1 L2338.1 1222.6 L2327.2 1228.9 Z"/>
<path d="M2325.6 1236.7 L2341.2 1224.2 L2360.0 1249.2 L2347.5 1261.7 Z"/>
<path d="M2067.8 1300.8 L2099.1 1278.9 L2111.6 1294.5 L2080.3 1324.2 Z"/>
<path d="M2158.4 1319.5 L2166.2 1313.2 L2175.6 1324.2 L2167.8 1330.4 Z"/>
<path d="M2394.4 1339.8 L2400.6 1303.9 L2427.2 1327.3 L2410.0 1347.6 Z"/>
</g>
<path d="M364.0 313.0 C372.7 318.7 400.8 336.2 416.0 347.0 C431.2 357.8 443.0 366.8 455.0 378.0 C467.0 389.2 478.2 401.8 488.0 414.0 C497.8 426.2 507.0 438.8 514.0 451.0 C521.0 463.2 526.8 474.5 530.0 487.0 C533.2 499.5 533.0 512.8 533.0 526.0 C533.0 539.2 530.8 555.3 530.0 566.0 C529.2 576.7 529.0 577.7 528.0 590.0 C527.0 602.3 527.0 621.7 524.0 640.0 C521.0 658.3 514.5 681.7 510.0 700.0 C505.5 718.3 500.8 735.8 497.0 750.0 C493.2 764.2 494.5 743.2 487.0 785.0 C479.5 826.8 463.5 938.5 452.0 1001.0 C440.5 1063.5 424.5 1126.8 418.0 1160.0 C411.5 1193.2 413.2 1187.2 413.0 1200.0 C412.8 1212.8 416.3 1230.8 417.0 1237.0" stroke="#e4e2d9" stroke-width="18" fill="none" stroke-linejoin="round"/>
<path d="M355.0 571.0 C365.8 572.0 399.2 575.0 420.0 577.0 C440.8 579.0 461.7 581.0 480.0 583.0 C498.3 585.0 521.7 588.0 530.0 589.0" stroke="#e4e2d9" stroke-width="19" fill="none" stroke-linejoin="round"/>
<path d="M355.0 792.0 C365.8 792.8 399.2 795.2 420.0 797.0 C440.8 798.8 460.0 800.2 480.0 803.0 C500.0 805.8 520.7 810.2 540.0 814.0 C559.3 817.8 586.7 824.0 596.0 826.0" stroke="#e4e2d9" stroke-width="20" fill="none" stroke-linejoin="round"/>
<path d="M786.0 493.0 C754.7 640.0 629.3 1228.0 598.0 1375.0" stroke="#e4e2d9" stroke-width="19" fill="none" stroke-linejoin="round"/>
<path d="M1088.0 125.0 C1044.2 333.3 868.8 1166.7 825.0 1375.0" stroke="#e4e2d9" stroke-width="18.5" fill="none" stroke-linejoin="round"/>
<path d="M1099.0 125.0 C1117.7 177.5 1184.7 365.0 1211.0 440.0 C1237.3 515.0 1243.5 535.0 1257.0 575.0 C1270.5 615.0 1286.2 662.5 1292.0 680.0" stroke="#e4e2d9" stroke-width="16.5" fill="none" stroke-linejoin="round"/>
<path d="M1207.0 920.0 C1194.3 981.3 1144.5 1224.7 1131.0 1288.0 C1117.5 1351.3 1128.5 1296.3 1126.0 1300.0 C1123.5 1303.7 1117.7 1308.3 1116.0 1310.0" stroke="#e4e2d9" stroke-width="16" fill="none" stroke-linejoin="round"/>
<path d="M1466.0 125.0 C1466.7 141.7 1468.7 192.8 1470.0 225.0 C1471.3 257.2 1471.7 294.7 1474.0 318.0 C1476.3 341.3 1478.2 344.2 1484.0 365.0 C1489.8 385.8 1500.7 419.5 1509.0 443.0 C1517.3 466.5 1528.5 485.5 1534.0 506.0 C1539.5 526.5 1543.7 550.8 1542.0 566.0 C1540.3 581.2 1530.8 586.7 1524.0 597.0 C1517.2 607.3 1508.3 617.5 1501.0 628.0 C1493.7 638.5 1490.2 638.0 1480.0 660.0 C1469.8 682.0 1451.7 730.0 1440.0 760.0 C1428.3 790.0 1415.0 826.7 1410.0 840.0" stroke="#e4e2d9" stroke-width="17" fill="none" stroke-linejoin="round"/>
<path d="M1388.0 925.0 C1392.0 930.3 1401.8 936.0 1412.0 957.0 C1422.2 978.0 1439.3 1027.2 1449.0 1051.0 C1458.7 1074.8 1461.7 1079.2 1470.0 1100.0 C1478.3 1120.8 1485.8 1130.7 1499.0 1176.0 C1512.2 1221.3 1540.7 1339.3 1549.0 1372.0" stroke="#e4e2d9" stroke-width="18" fill="none" stroke-linejoin="round"/>
<path d="M1932.0 125.0 C1924.7 152.5 1895.3 262.5 1888.0 290.0" stroke="#e4e2d9" stroke-width="18" fill="none" stroke-linejoin="round"/>
<path d="M1774.0 487.0 C1786.2 500.2 1815.7 531.2 1847.0 566.0 C1878.3 600.8 1901.0 623.5 1962.0 696.0 C2023.0 768.5 2163.8 940.0 2213.0 1001.0 C2262.2 1062.0 2207.5 1000.2 2257.0 1062.0 C2306.5 1123.8 2467.8 1320.3 2510.0 1372.0" stroke="#e4e2d9" stroke-width="19.5" fill="none" stroke-linejoin="round"/>
<path d="M2257.0 1062.0 C2201.2 1113.0 1979.8 1315.0 1922.0 1368.0 C1864.2 1421.0 1912.0 1378.0 1910.0 1380.0" stroke="#e4e2d9" stroke-width="19.5" fill="none" stroke-linejoin="round"/>
<path d="M1979.0 1310.0 C1986.0 1320.8 2014.0 1364.2 2021.0 1375.0" stroke="#e4e2d9" stroke-width="17" fill="none" stroke-linejoin="round"/>
<path d="M1774 487 C1782 470 1780 450 1777 443 C1772 430 1765 424 1755 422 C1740 422 1720 435 1696 440 L1646 440 C1632 446 1622 455 1620 470 C1618 485 1620 500 1634 513 C1645 520 1660 515 1665 512 L1696 497 C1710 505 1720 515 1730 515 C1745 512 1760 500 1774 487 Z" stroke="#e4e2d9" stroke-width="20" fill="none"/>
<path d="M364.0 313.0 C372.7 318.7 400.8 336.2 416.0 347.0 C431.2 357.8 443.0 366.8 455.0 378.0 C467.0 389.2 478.2 401.8 488.0 414.0 C497.8 426.2 507.0 438.8 514.0 451.0 C521.0 463.2 526.8 474.5 530.0 487.0 C533.2 499.5 533.0 512.8 533.0 526.0 C533.0 539.2 530.8 555.3 530.0 566.0 C529.2 576.7 529.0 577.7 528.0 590.0 C527.0 602.3 527.0 621.7 524.0 640.0 C521.0 658.3 514.5 681.7 510.0 700.0 C505.5 718.3 500.8 735.8 497.0 750.0 C493.2 764.2 494.5 743.2 487.0 785.0 C479.5 826.8 463.5 938.5 452.0 1001.0 C440.5 1063.5 424.5 1126.8 418.0 1160.0 C411.5 1193.2 413.2 1187.2 413.0 1200.0 C412.8 1212.8 416.3 1230.8 417.0 1237.0" stroke="#ffffff" stroke-width="14" fill="none" stroke-linejoin="round"/>
<path d="M355.0 571.0 C365.8 572.0 399.2 575.0 420.0 577.0 C440.8 579.0 461.7 581.0 480.0 583.0 C498.3 585.0 521.7 588.0 530.0 589.0" stroke="#ffffff" stroke-width="15" fill="none" stroke-linejoin="round"/>
<path d="M355.0 792.0 C365.8 792.8 399.2 795.2 420.0 797.0 C440.8 798.8 460.0 800.2 480.0 803.0 C500.0 805.8 520.7 810.2 540.0 814.0 C559.3 817.8 586.7 824.0 596.0 826.0" stroke="#ffffff" stroke-width="16" fill="none" stroke-linejoin="round"/>
<path d="M786.0 493.0 C754.7 640.0 629.3 1228.0 598.0 1375.0" stroke="#ffffff" stroke-width="15" fill="none" stroke-linejoin="round"/>
<path d="M1088.0 125.0 C1044.2 333.3 868.8 1166.7 825.0 1375.0" stroke="#ffffff" stroke-width="14.5" fill="none" stroke-linejoin="round"/>
<path d="M1099.0 125.0 C1117.7 177.5 1184.7 365.0 1211.0 440.0 C1237.3 515.0 1243.5 535.0 1257.0 575.0 C1270.5 615.0 1286.2 662.5 1292.0 680.0" stroke="#ffffff" stroke-width="12.5" fill="none" stroke-linejoin="round"/>
<path d="M1207.0 920.0 C1194.3 981.3 1144.5 1224.7 1131.0 1288.0 C1117.5 1351.3 1128.5 1296.3 1126.0 1300.0 C1123.5 1303.7 1117.7 1308.3 1116.0 1310.0" stroke="#ffffff" stroke-width="12" fill="none" stroke-linejoin="round"/>
<path d="M1466.0 125.0 C1466.7 141.7 1468.7 192.8 1470.0 225.0 C1471.3 257.2 1471.7 294.7 1474.0 318.0 C1476.3 341.3 1478.2 344.2 1484.0 365.0 C1489.8 385.8 1500.7 419.5 1509.0 443.0 C1517.3 466.5 1528.5 485.5 1534.0 506.0 C1539.5 526.5 1543.7 550.8 1542.0 566.0 C1540.3 581.2 1530.8 586.7 1524.0 597.0 C1517.2 607.3 1508.3 617.5 1501.0 628.0 C1493.7 638.5 1490.2 638.0 1480.0 660.0 C1469.8 682.0 1451.7 730.0 1440.0 760.0 C1428.3 790.0 1415.0 826.7 1410.0 840.0" stroke="#ffffff" stroke-width="13" fill="none" stroke-linejoin="round"/>
<path d="M1388.0 925.0 C1392.0 930.3 1401.8 936.0 1412.0 957.0 C1422.2 978.0 1439.3 1027.2 1449.0 1051.0 C1458.7 1074.8 1461.7 1079.2 1470.0 1100.0 C1478.3 1120.8 1485.8 1130.7 1499.0 1176.0 C1512.2 1221.3 1540.7 1339.3 1549.0 1372.0" stroke="#ffffff" stroke-width="14" fill="none" stroke-linejoin="round"/>
<path d="M1932.0 125.0 C1924.7 152.5 1895.3 262.5 1888.0 290.0" stroke="#ffffff" stroke-width="14" fill="none" stroke-linejoin="round"/>
<path d="M1774.0 487.0 C1786.2 500.2 1815.7 531.2 1847.0 566.0 C1878.3 600.8 1901.0 623.5 1962.0 696.0 C2023.0 768.5 2163.8 940.0 2213.0 1001.0 C2262.2 1062.0 2207.5 1000.2 2257.0 1062.0 C2306.5 1123.8 2467.8 1320.3 2510.0 1372.0" stroke="#ffffff" stroke-width="15.5" fill="none" stroke-linejoin="round"/>
<path d="M2257.0 1062.0 C2201.2 1113.0 1979.8 1315.0 1922.0 1368.0 C1864.2 1421.0 1912.0 1378.0 1910.0 1380.0" stroke="#ffffff" stroke-width="15.5" fill="none" stroke-linejoin="round"/>
<path d="M1979.0 1310.0 C1986.0 1320.8 2014.0 1364.2 2021.0 1375.0" stroke="#ffffff" stroke-width="13" fill="none" stroke-linejoin="round"/>
<path d="M1774 487 C1782 470 1780 450 1777 443 C1772 430 1765 424 1755 422 C1740 422 1720 435 1696 440 L1646 440 C1632 446 1622 455 1620 470 C1618 485 1620 500 1634 513 C1645 520 1660 515 1665 512 L1696 497 C1710 505 1720 515 1730 515 C1745 512 1760 500 1774 487 Z" stroke="#ffffff" stroke-width="16" fill="none"/>
<path d="M1447 1038 Q1462 1060 1512 1056" stroke="#fff" stroke-width="15" fill="none"/>
<path d="M1470 1210 Q1495 1206 1504 1224" stroke="#fff" stroke-width="15" fill="none"/>
<path d="M852 1274 L1084 1318 L1128 1304" stroke="#fff" stroke-width="2" fill="none"/>
<path d="M1177 1368 L1290 1332 L1340 1333.6 L1396 1340 Q1402 1346 1404 1372" stroke="#fff" stroke-width="2" fill="none"/>
<path d="M2490.0 116.0 C2403.7 191.0 2082.2 472.0 1972.0 566.0 C1861.8 660.0 1861.2 654.2 1828.8 680.0 C1796.3 705.8 1792.7 708.1 1777.5 721.0 C1762.3 733.9 1751.2 744.3 1737.5 757.5 C1723.8 770.7 1710.2 783.9 1695.0 800.0 C1679.8 816.1 1661.4 836.2 1646.0 854.0 C1630.6 871.8 1616.0 888.8 1602.5 906.5 C1589.0 924.2 1577.9 939.8 1565.0 960.0 C1552.1 980.2 1554.8 979.7 1525.0 1028.0 C1495.2 1076.3 1409.2 1213.0 1386.0 1250.0 L1381 1268 L1381 1282 L1320 1380 L1355 1380 L1407 1295 L1424.5 1283.7 C1451.1 1241.1 1554.3 1076.7 1584.0 1028.0 C1613.7 979.3 1593.2 1005.9 1602.5 991.5 C1611.8 977.1 1627.5 956.5 1640.0 941.5 C1652.5 926.5 1665.0 916.1 1677.5 901.5 C1690.0 886.9 1702.9 867.4 1715.0 854.0 C1727.1 840.6 1737.9 832.3 1750.0 821.0 C1762.1 809.7 1775.0 797.8 1787.5 786.0 C1800.0 774.2 1811.5 762.5 1825.0 750.0 C1838.5 737.5 1855.2 722.7 1868.8 711.0 C1882.2 699.3 1877.3 704.2 1906.0 680.0 C1934.7 655.8 1932.0 660.0 2041.0 566.0 C2150.0 472.0 2473.5 191.0 2560.0 116.0 L2560 116 Z" fill="#fbe26d" stroke="#f09d3a" stroke-width="2.2" stroke-linejoin="round"/>
<g fill="none" stroke="#f08a84" stroke-width="1.3" stroke-linejoin="round">
<path d="M740.0 143.5 L647.8 566.0"/>
<path d="M835.3 131.0 L740.0 566.0"/>
<path d="M872.8 131.0 L777.5 566.0"/>
<path d="M1072.8 131.0 L977.5 566.0"/>
<path d="M1105.6 149.8 L1018.1 566.0"/>
<path d="M1105.6 149.8 L1165.0 334.1"/>
<path d="M1140.0 131.0 L1165.0 207.6"/>
<path d="M686.9 149.8 L733.8 177.9"/>
<path d="M740.0 149.8 L827.5 171.6"/>
<path d="M649.4 131.0 L686.9 149.8"/>
<path d="M588.4 170.1 L705.6 299.8"/>
<path d="M568.1 213.8 L586.9 379.4"/>
<path d="M468.1 373.2 L586.9 379.4"/>
<path d="M586.9 379.4 L688.4 379.4"/>
<path d="M508.8 187.2 L419.7 329.4"/>
<path d="M508.8 187.2 L527.5 209.1"/>
<path d="M527.5 209.1 L549.4 214.8"/>
<path d="M549.4 214.8 L568.1 213.8"/>
<path d="M568.1 213.8 L577.5 193.5"/>
<path d="M577.5 193.5 L580.6 162.2"/>
<path d="M580.6 162.2 L577.5 131.0"/>
<path d="M543.1 468.5 L682.2 407.6"/>
<path d="M674.4 448.2 L772.8 423.2"/>
<path d="M555.6 537.2 L650.9 540.4"/>
<path d="M655.6 527.9 L744.7 545.1"/>
<path d="M365.0 293.5 L419.7 329.4"/>
<path d="M419.7 329.4 L468.1 373.2"/>
<path d="M468.1 373.2 L505.6 412.2"/>
<path d="M505.6 412.2 L533.8 449.8"/>
<path d="M533.8 449.8 L546.2 490.4"/>
<path d="M546.2 490.4 L554.1 537.2"/>
<path d="M554.1 537.2 L555.6 566.0"/>
<path d="M365.0 337.2 L427.5 384.1"/>
<path d="M427.5 384.1 L483.8 448.2"/>
<path d="M483.8 448.2 L505.6 481.0"/>
<path d="M505.6 481.0 L518.1 518.5"/>
<path d="M518.1 518.5 L519.7 549.8"/>
<path d="M519.7 549.8 L515.0 566.0"/>
<path d="M427.5 385.7 L365.0 443.5"/>
<path d="M483.8 448.2 L411.9 502.9"/>
<path d="M411.9 502.9 L365.0 463.8"/>
<path d="M411.9 502.9 L405.0 554.4"/>
<path d="M365.0 551.3 L405.6 554.4"/>
<path d="M405.6 554.4 L515.0 566.0"/>
<path d="M865.0 187.2 L1015.0 357.6"/>
<path d="M822.8 374.8 L900.9 390.4"/>
<path d="M900.9 390.4 L1022.8 356.0"/>
<path d="M900.9 390.4 L865.0 566.0"/>
<path d="M885.3 474.8 L993.1 498.2"/>
<path d="M1049.4 421.6 L1165.0 377.9"/>
<path d="M1049.4 421.6 L1075.9 477.9"/>
<path d="M1075.9 477.9 L1115.0 541.9"/>
<path d="M1115.0 541.9 L1127.5 566.0"/>
<path d="M1075.9 477.9 L1165.0 443.5"/>
<path d="M1115.0 541.9 L1165.0 521.6"/>
<path d="M1018.1 556.0 L1052.5 566.0"/>
<path d="M365.0 220.1 L383.8 209.1"/>
<path d="M443.1 170.1 L502.5 149.8"/>
<path d="M1165.0 209.1 L1277.5 566.0"/>
<path d="M1277.5 566.0 L1277.5 566.0"/>
<path d="M1165.0 334.1 L1233.8 566.0"/>
<path d="M1233.8 566.0 L1233.8 566.0"/>
<path d="M1165.0 198.2 L1321.2 148.2"/>
<path d="M1180.6 257.6 L1321.2 213.8"/>
<path d="M1199.4 316.9 L1321.2 280.4"/>
<path d="M1219.7 376.3 L1333.8 341.9"/>
<path d="M1238.4 435.7 L1354.1 399.8"/>
<path d="M1257.2 495.1 L1371.2 460.7"/>
<path d="M1274.4 556.0 L1390.0 518.5"/>
<path d="M1165.0 373.2 L1174.4 370.1"/>
<path d="M1165.0 443.5 L1194.7 432.6"/>
<path d="M1165.0 524.8 L1216.6 507.6"/>
<path d="M1321.2 131.0 L1321.2 293.5"/>
<path d="M1321.2 293.5 L1343.1 363.8"/>
<path d="M1343.1 363.8 L1354.1 399.8"/>
<path d="M1354.1 399.8 L1371.2 460.7"/>
<path d="M1371.2 460.7 L1386.9 498.2"/>
<path d="M1386.9 498.2 L1405.6 566.0"/>
<path d="M1405.6 566.0 L1405.6 566.0"/>
<path d="M1230.6 131.0 L1230.6 174.8"/>
<path d="M1321.2 148.2 L1443.1 148.2"/>
<path d="M1321.2 212.2 L1444.7 215.4"/>
<path d="M1443.1 131.0 L1444.7 281.0"/>
<path d="M1444.7 281.0 L1452.5 331.0"/>
<path d="M1452.5 331.0 L1465.0 371.6"/>
<path d="M1465.0 371.6 L1493.1 463.8"/>
<path d="M1493.1 463.8 L1522.8 549.8"/>
<path d="M1522.8 549.8 L1524.4 566.0"/>
<path d="M1343.1 363.8 L1452.5 331.0"/>
<path d="M1386.9 498.2 L1493.1 463.8"/>
<path d="M1480.6 131.0 L1482.2 293.5"/>
<path d="M1482.2 293.5 L1488.4 320.1"/>
<path d="M1499.4 359.1 L1518.1 412.2"/>
<path d="M1518.1 412.2 L1540.0 474.8"/>
<path d="M1540.0 474.8 L1560.3 546.6"/>
<path d="M1560.3 546.6 L1568.1 566.0"/>
<path d="M1482.2 232.6 L1582.2 232.6"/>
<path d="M1582.2 131.0 L1582.2 160.7"/>
<path d="M1582.2 160.7 L1605.6 195.1"/>
<path d="M1605.6 195.1 L1582.2 232.6"/>
<path d="M1582.2 232.6 L1582.2 320.1"/>
<path d="M1605.6 195.1 L1718.1 196.6"/>
<path d="M1649.4 131.0 L1649.4 318.5"/>
<path d="M1718.1 131.0 L1716.6 354.4"/>
<path d="M1488.4 320.1 L1716.6 316.9"/>
<path d="M1499.4 359.1 L1862.0 352.7"/>
<path d="M1862.0 426.2 L1804.1 477.9"/>
<path d="M1804.1 477.9 L1862.0 547.4"/>
<path d="M1702.5 566.0 L1755.6 520.1"/>
<path d="M1755.6 520.1 L1799.4 566.0"/>
<path d="M2441.2 131.0 L1925.6 566.0"/>
<path d="M2560.0 170.1 L2550.6 170.1"/>
<path d="M2550.6 170.1 L2085.0 566.0"/>
<path d="M2072.5 163.8 L2210.0 324.8"/>
<path d="M2083.4 131.0 L2072.5 163.8"/>
<path d="M2072.5 163.8 L2027.2 302.9"/>
<path d="M2027.2 302.9 L1947.5 356.0"/>
<path d="M1947.5 356.0 L1944.4 351.3"/>
<path d="M1944.4 351.3 L1862.0 352.7"/>
<path d="M2056.9 131.0 L2081.9 140.4"/>
<path d="M2103.8 131.0 L2327.2 224.8"/>
<path d="M2031.9 290.4 L2131.9 391.9"/>
<path d="M1933.4 362.2 L2020.9 487.2"/>
<path d="M1995.9 327.9 L2083.4 432.6"/>
<path d="M1933.4 362.2 L1862.0 425.9"/>
<path d="M1862.0 549.3 L1875.6 566.0"/>
<path d="M1933.4 362.2 L1964.7 406.0"/>
<path d="M365.0 589.4 L422.8 597.2"/>
<path d="M422.8 597.2 L490.0 606.6"/>
<path d="M490.0 606.6 L502.5 628.5"/>
<path d="M502.5 628.5 L479.1 766.0"/>
<path d="M479.1 766.0 L455.6 781.6"/>
<path d="M455.6 781.6 L393.1 778.5"/>
<path d="M393.1 778.5 L365.0 781.6"/>
<path d="M422.8 597.2 L405.6 686.3"/>
<path d="M405.6 686.3 L365.0 691.0"/>
<path d="M405.6 686.3 L488.4 703.5"/>
<path d="M388.4 689.4 L393.1 778.5"/>
<path d="M365.0 816.0 L447.8 819.1"/>
<path d="M447.8 819.1 L461.9 837.9"/>
<path d="M461.9 837.9 L436.2 979.0"/>
<path d="M365.0 925.4 L443.1 939.4"/>
<path d="M552.5 566.0 L527.5 703.5"/>
<path d="M527.5 703.5 L515.0 772.2"/>
<path d="M515.0 772.2 L527.5 794.1"/>
<path d="M527.5 794.1 L599.4 808.2"/>
<path d="M543.1 623.8 L633.8 641.0"/>
<path d="M527.5 705.1 L618.1 722.2"/>
<path d="M618.1 722.2 L700.9 736.3"/>
<path d="M593.1 844.1 L522.8 831.6"/>
<path d="M522.8 831.6 L499.4 847.2"/>
<path d="M499.4 847.2 L472.6 979.0"/>
<path d="M485.3 919.1 L575.9 936.3"/>
<path d="M647.8 566.0 L569.2 979.0"/>
<path d="M740.0 566.0 L652.5 979.0"/>
<path d="M777.5 566.0 L691.5 979.0"/>
<path d="M865.0 566.0 L830.6 730.1"/>
<path d="M746.2 714.4 L830.6 730.1"/>
<path d="M830.6 730.1 L940.0 753.5"/>
<path d="M979.1 566.0 L891.5 979.0"/>
<path d="M1016.6 566.0 L929.0 979.0"/>
<path d="M1140.0 584.8 L1060.1 979.0"/>
<path d="M863.4 580.1 L971.2 603.5"/>
<path d="M721.2 841.0 L802.5 859.8"/>
<path d="M802.5 859.8 L911.9 881.6"/>
<path d="M802.5 859.8 L778.8 979.0"/>
<path d="M1054.1 566.0 L1140.0 583.2"/>
<path d="M1140.0 583.2 L1165.0 589.4"/>
<path d="M1130.6 566.0 L1140.0 583.2"/>
<path d="M1005.6 619.1 L1127.5 644.1"/>
<path d="M1127.5 644.1 L1165.0 653.5"/>
<path d="M994.7 680.1 L1115.0 703.5"/>
<path d="M982.2 741.0 L1102.5 766.0"/>
<path d="M968.1 801.9 L1088.4 826.9"/>
<path d="M1088.4 826.9 L1165.0 844.1"/>
<path d="M955.6 861.3 L1075.9 887.9"/>
<path d="M1075.9 887.9 L1165.0 908.2"/>
<path d="M943.1 923.8 L1063.4 948.8"/>
<path d="M1063.4 948.8 L1165.0 972.2"/>
<path d="M1165.0 587.9 L1204.1 595.7"/>
<path d="M1165.0 651.9 L1204.1 659.8"/>
<path d="M1165.0 842.6 L1204.1 850.4"/>
<path d="M1165.0 908.2 L1196.2 912.9"/>
<path d="M1165.0 970.7 L1183.8 975.4"/>
<path d="M1249.4 931.6 L1230.6 939.4"/>
<path d="M1230.6 939.4 L1220.6 979.0"/>
<path d="M1204.1 887.9 L1182.7 979.0"/>
<path d="M1377.5 931.6 L1398.8 979.0"/>
<path d="M1415.0 931.6 L1438.5 979.0"/>
<path d="M1524.4 566.0 L1474.4 650.4"/>
<path d="M1560.3 566.0 L1557.2 581.6"/>
<path d="M1557.2 581.6 L1504.1 656.6"/>
<path d="M1504.1 656.6 L1474.4 692.6"/>
<path d="M1504.1 658.2 L1596.2 711.3"/>
<path d="M1568.1 566.0 L1596.2 650.4"/>
<path d="M1596.2 650.4 L1680.6 662.9"/>
<path d="M1622.8 730.1 L1680.6 664.4"/>
<path d="M1597.8 712.9 L1554.1 770.7"/>
<path d="M1554.1 770.7 L1511.9 833.2"/>
<path d="M1474.4 720.7 L1554.1 770.7"/>
<path d="M1505.6 741.0 L1474.4 791.0"/>
<path d="M1511.9 833.2 L1599.4 892.6"/>
<path d="M1511.9 833.2 L1474.4 862.9"/>
<path d="M1643.1 620.7 L1704.1 567.6"/>
<path d="M1704.1 567.6 L1802.5 672.2"/>
<path d="M1643.1 620.7 L1743.1 726.9"/>
<path d="M1796.2 566.0 L1850.9 631.6"/>
<path d="M1862.0 622.1 L1850.9 631.6"/>
<path d="M1850.9 631.6 L1802.5 672.2"/>
<path d="M1802.5 672.2 L1743.1 726.9"/>
<path d="M1743.1 726.9 L1665.0 797.2"/>
<path d="M1665.0 797.2 L1599.4 892.6"/>
<path d="M1599.4 892.6 L1539.6 979.0"/>
<path d="M1862.0 751.4 L1790.0 809.8"/>
<path d="M1790.0 809.8 L1715.0 878.5"/>
<path d="M1715.0 878.5 L1656.0 979.0"/>
<path d="M1874.1 566.0 L1895.9 591.0"/>
<path d="M1925.6 566.0 L1895.9 591.0"/>
<path d="M1895.9 591.0 L1862.0 621.4"/>
<path d="M2085.0 566.0 L1960.0 672.2"/>
<path d="M1960.0 672.2 L2219.5 979.0"/>
<path d="M1931.2 697.2 L2172.4 979.0"/>
<path d="M1931.2 697.2 L1862.0 751.5"/>
<path d="M2161.6 969.1 L2149.5 979.0"/>
<path d="M435.8 979.0 L425.9 1030.4"/>
<path d="M425.9 1030.4 L407.2 1124.2"/>
<path d="M407.2 1124.2 L390.0 1213.2"/>
<path d="M365.0 1019.5 L425.9 1030.4"/>
<path d="M365.0 1116.4 L407.2 1124.2"/>
<path d="M365.0 1211.7 L390.0 1213.2"/>
<path d="M473.3 979.0 L433.8 1188.2"/>
<path d="M468.1 1005.4 L558.8 1022.6"/>
<path d="M452.5 1091.4 L543.1 1108.6"/>
<path d="M435.3 1177.3 L527.5 1194.5"/>
<path d="M568.5 979.0 L510.3 1278.9"/>
<path d="M510.3 1278.9 L365.0 1308.6"/>
<path d="M419.7 1250.8 L416.6 1297.6"/>
<path d="M422.8 1188.2 L432.5 1189.8"/>
<path d="M432.5 1189.8 L441.2 1194.2"/>
<path d="M441.2 1194.2 L448.1 1201.1"/>
<path d="M448.1 1201.1 L452.5 1209.8"/>
<path d="M452.5 1209.8 L454.1 1219.5"/>
<path d="M454.1 1219.5 L452.5 1229.2"/>
<path d="M452.5 1229.2 L448.1 1237.9"/>
<path d="M448.1 1237.9 L441.2 1244.8"/>
<path d="M441.2 1244.8 L432.5 1249.2"/>
<path d="M432.5 1249.2 L422.8 1250.8"/>
<path d="M422.8 1250.8 L413.2 1249.2"/>
<path d="M413.2 1249.2 L404.4 1244.8"/>
<path d="M404.4 1244.8 L397.5 1237.9"/>
<path d="M397.5 1237.9 L393.1 1229.2"/>
<path d="M393.1 1229.2 L391.6 1219.5"/>
<path d="M391.6 1219.5 L393.1 1209.8"/>
<path d="M393.1 1209.8 L397.5 1201.1"/>
<path d="M397.5 1201.1 L404.4 1194.2"/>
<path d="M404.4 1194.2 L413.2 1189.8"/>
<path d="M413.2 1189.8 L422.8 1188.2"/>
<path d="M653.9 979.0 L568.1 1367.9"/>
<path d="M690.0 979.0 L607.2 1367.9"/>
<path d="M688.4 994.5 L772.8 1011.7"/>
<path d="M772.8 1011.7 L880.6 1035.1"/>
<path d="M779.4 979.0 L772.8 1011.7"/>
<path d="M655.6 1146.1 L847.8 1188.2"/>
<path d="M638.4 1222.6 L733.8 1244.5"/>
<path d="M733.8 1244.5 L830.6 1264.8"/>
<path d="M733.8 1244.5 L707.2 1367.9"/>
<path d="M718.1 1321.1 L815.0 1341.4"/>
<path d="M893.0 979.0 L808.8 1367.9"/>
<path d="M929.1 979.0 L847.8 1367.9"/>
<path d="M929.1 985.1 L1050.9 1010.1"/>
<path d="M1050.9 1010.1 L1165.0 1033.6"/>
<path d="M918.1 1046.1 L1038.4 1071.1"/>
<path d="M1038.4 1071.1 L1158.8 1097.6"/>
<path d="M905.6 1107.0 L1024.4 1132.0"/>
<path d="M1024.4 1132.0 L1144.7 1157.0"/>
<path d="M891.6 1167.9 L1011.9 1192.9"/>
<path d="M1011.9 1192.9 L1133.8 1219.5"/>
<path d="M874.4 1242.9 L996.2 1269.5"/>
<path d="M996.2 1269.5 L1154.1 1302.3"/>
<path d="M1154.1 1302.3 L1165.0 1294.5"/>
<path d="M1057.3 979.0 L996.2 1269.5"/>
<path d="M1165.0 1082.0 L1132.2 1228.9"/>
<path d="M1165.0 1238.2 L1154.1 1302.3"/>
<path d="M1165.0 1035.1 L1171.2 1036.7"/>
<path d="M1221.4 979.0 L1165.0 1250.8"/>
<path d="M1183.1 979.0 L1165.0 1082.0"/>
<path d="M1405.6 996.1 L1293.1 1053.9"/>
<path d="M1293.1 1053.9 L1343.1 1153.9"/>
<path d="M1343.1 1153.9 L1165.0 1294.5"/>
<path d="M1397.6 979.0 L1438.4 1063.2"/>
<path d="M1438.4 1063.2 L1435.3 1127.3"/>
<path d="M1435.3 1127.3 L1283.8 1367.9"/>
<path d="M1438.7 979.0 L1466.6 1033.6"/>
<path d="M1466.6 1033.6 L1504.1 1027.3"/>
<path d="M1504.1 1027.3 L1537.3 979.0"/>
<path d="M1655.4 979.0 L1521.2 1164.8"/>
<path d="M1521.2 1164.8 L1568.1 1367.9"/>
<path d="M1396.2 1367.9 L1480.6 1233.6"/>
<path d="M1480.6 1233.6 L1504.1 1238.2"/>
<path d="M1504.1 1238.2 L1535.3 1367.9"/>
<path d="M1568.1 1336.7 L1777.5 1280.4"/>
<path d="M1777.5 1280.4 L1854.1 1230.4"/>
<path d="M1854.1 1230.4 L1862.0 1223.6"/>
<path d="M1777.5 1280.4 L1818.1 1367.9"/>
<path d="M1854.1 1230.4 L1862.0 1239.6"/>
<path d="M1686.9 1305.4 L1702.5 1367.9"/>
<path d="M2172.8 979.0 L2235.0 1050.8"/>
<path d="M2235.0 1050.8 L2236.6 1060.1"/>
<path d="M2236.6 1060.1 L2222.5 1077.3"/>
<path d="M2222.5 1077.3 L2147.5 1141.4"/>
<path d="M2147.5 1141.4 L2075.6 1200.8"/>
<path d="M2075.6 1200.8 L2005.3 1261.7"/>
<path d="M2005.3 1261.7 L1933.4 1322.6"/>
<path d="M1933.4 1322.6 L1906.9 1344.5"/>
<path d="M2150.0 979.0 L2066.2 1047.6"/>
<path d="M2066.2 1047.6 L1997.5 1108.6"/>
<path d="M1997.5 1108.6 L1924.1 1169.5"/>
<path d="M1924.1 1169.5 L1862.0 1223.3"/>
<path d="M2066.2 1047.6 L2147.5 1141.4"/>
<path d="M1997.5 1108.6 L2075.6 1200.8"/>
<path d="M1924.1 1169.5 L2005.3 1261.7"/>
<path d="M1862.0 1240.0 L1933.4 1322.6"/>
<path d="M2218.5 979.0 L2535.0 1367.9"/>
<path d="M2410.0 1202.3 L2560.0 1075.8"/>
<path d="M2491.2 1363.2 L2463.1 1325.8"/>
<path d="M2463.1 1325.8 L2278.8 1103.9"/>
<path d="M2278.8 1103.9 L2263.1 1097.6"/>
<path d="M2263.1 1097.6 L2250.6 1102.3"/>
<path d="M2250.6 1102.3 L2172.5 1169.5"/>
<path d="M2172.5 1169.5 L2100.6 1232.0"/>
<path d="M2100.6 1232.0 L2019.4 1303.9"/>
<path d="M2019.4 1303.9 L2011.6 1316.4"/>
<path d="M2011.6 1316.4 L2014.7 1328.9"/>
<path d="M2014.7 1328.9 L2028.8 1347.6"/>
<path d="M2172.5 1171.1 L2252.2 1266.4"/>
<path d="M2150.6 1347.6 L2344.4 1188.2"/>
<path d="M2100.6 1232.0 L2180.3 1325.8"/>
<path d="M2216.2 1299.2 L2266.2 1347.6"/>
<path d="M2297.5 1346.1 L2406.9 1258.6"/>
</g>
<path d="M1205 722 L1115 705 L1102.5 766 L1205 788" fill="none" stroke="#34e0f0" stroke-width="2.2"/>
<g fill="#4f9a2c" stroke="#1d3b10" stroke-width="1.2">
<circle cx="643.1" cy="182.6" r="3"/>
<circle cx="532.8" cy="261.6" r="3"/>
<circle cx="618.1" cy="256.0" r="3"/>
<circle cx="1042.2" cy="148.2" r="3"/>
<circle cx="1090.9" cy="309.1" r="3"/>
<circle cx="382.2" cy="370.1" r="3"/>
<circle cx="439.1" cy="431.0" r="3"/>
<circle cx="572.8" cy="499.8" r="3"/>
<circle cx="730.9" cy="494.4" r="3"/>
<circle cx="986.9" cy="437.9" r="3"/>
<circle cx="372.8" cy="534.1" r="3"/>
<circle cx="497.2" cy="534.8" r="3"/>
<circle cx="1042.2" cy="521.6" r="3"/>
<circle cx="954.7" cy="558.5" r="3"/>
<circle cx="1186.9" cy="221.6" r="3"/>
<circle cx="1434.4" cy="189.8" r="3"/>
<circle cx="1207.8" cy="284.8" r="3"/>
<circle cx="1231.6" cy="339.8" r="3"/>
<circle cx="1442.5" cy="370.1" r="3"/>
<circle cx="1246.9" cy="401.9" r="3"/>
<circle cx="1169.7" cy="413.8" r="3"/>
<circle cx="1192.5" cy="479.4" r="3"/>
<circle cx="1266.6" cy="464.8" r="3"/>
<circle cx="1284.7" cy="522.6" r="3"/>
<circle cx="1216.6" cy="556.6" r="3"/>
<circle cx="1509.7" cy="556.0" r="3"/>
<circle cx="1749.4" cy="232.6" r="3"/>
<circle cx="1839.1" cy="230.1" r="3"/>
<circle cx="1675.6" cy="416.6" r="3"/>
<circle cx="1785.9" cy="420.1" r="3"/>
<circle cx="1607.8" cy="446.9" r="3"/>
<circle cx="1727.5" cy="476.9" r="3"/>
<circle cx="1615.6" cy="513.8" r="3"/>
<circle cx="1670.0" cy="526.9" r="3"/>
<circle cx="1985.0" cy="162.9" r="3"/>
<circle cx="1968.8" cy="230.1" r="3"/>
<circle cx="1930.9" cy="282.9" r="3"/>
<circle cx="2356.9" cy="205.1" r="3"/>
<circle cx="2168.8" cy="338.8" r="3"/>
<circle cx="2078.8" cy="381.0" r="3"/>
<circle cx="2063.8" cy="436.6" r="3"/>
<circle cx="1939.7" cy="493.5" r="3"/>
<circle cx="1956.9" cy="517.9" r="3"/>
<circle cx="1878.8" cy="556.6" r="3"/>
<circle cx="571.9" cy="583.8" r="3"/>
<circle cx="369.7" cy="612.9" r="3"/>
<circle cx="480.9" cy="656.0" r="3"/>
<circle cx="555.6" cy="661.9" r="3"/>
<circle cx="440.6" cy="751.9" r="3"/>
<circle cx="540.0" cy="751.9" r="3"/>
<circle cx="920.6" cy="667.6" r="3"/>
<circle cx="1040.0" cy="596.0" r="3"/>
<circle cx="1033.8" cy="656.0" r="3"/>
<circle cx="1036.9" cy="720.7" r="3"/>
<circle cx="1013.1" cy="777.9" r="3"/>
<circle cx="896.9" cy="813.8" r="3"/>
<circle cx="415.9" cy="850.7" r="3"/>
<circle cx="515.9" cy="887.9" r="3"/>
<circle cx="976.9" cy="898.8" r="3"/>
<circle cx="852.8" cy="948.8" r="3"/>
<circle cx="962.8" cy="961.9" r="3"/>
<circle cx="498.1" cy="966.6" r="3"/>
<circle cx="1765.6" cy="687.9" r="3"/>
<circle cx="1718.8" cy="740.1" r="3"/>
<circle cx="1639.7" cy="817.9" r="3"/>
<circle cx="1455.6" cy="936.9" r="3"/>
<circle cx="1481.6" cy="948.8" r="3"/>
<circle cx="1506.9" cy="946.6" r="3"/>
<circle cx="414.1" cy="985.1" r="3"/>
<circle cx="480.6" cy="1057.0" r="3"/>
<circle cx="397.8" cy="1075.8" r="3"/>
<circle cx="465.6" cy="1143.9" r="3"/>
<circle cx="382.2" cy="1176.7" r="3"/>
<circle cx="461.9" cy="1232.0" r="3"/>
<circle cx="382.2" cy="1240.8" r="3"/>
<circle cx="846.9" cy="1114.8" r="3"/>
<circle cx="820.9" cy="1217.0" r="3"/>
<circle cx="802.8" cy="1300.8" r="3"/>
<circle cx="943.8" cy="1087.6" r="3"/>
<circle cx="1122.8" cy="1125.8" r="3"/>
<circle cx="903.4" cy="1210.8" r="3"/>
<circle cx="1104.4" cy="1251.7" r="3"/>
<circle cx="1424.7" cy="1077.9" r="3"/>
<circle cx="1448.8" cy="1315.8" r="3"/>
<circle cx="2179.7" cy="1032.9" r="3"/>
<circle cx="2089.7" cy="1159.8" r="3"/>
<circle cx="2029.7" cy="1227.9" r="3"/>
<circle cx="1958.4" cy="1279.8" r="3"/>
<circle cx="1871.9" cy="1344.5" r="3"/>
<circle cx="2157.8" cy="1204.8" r="3"/>
<circle cx="2293.8" cy="1154.5" r="3"/>
<circle cx="2360.0" cy="1227.9" r="3"/>
<circle cx="2069.4" cy="1284.5" r="3"/>
<circle cx="2425.6" cy="1307.9" r="3"/>
</g>
<text x="1075" y="165" transform="rotate(-78 1075 165)" text-anchor="middle" dominant-baseline="central" font-size="13" fill="#4a4a4a" letter-spacing="1" font-family="Liberation Sans">Turnpike Rd</text>
<text x="968" y="672" transform="rotate(-78 968 672)" text-anchor="middle" dominant-baseline="central" font-size="13" fill="#4a4a4a" letter-spacing="1" font-family="Liberation Sans">Turnpike Rd</text>
<text x="861" y="1185" transform="rotate(-78 861 1185)" text-anchor="middle" dominant-baseline="central" font-size="13" fill="#4a4a4a" letter-spacing="1" font-family="Liberation Sans">Turnpike Rd</text>
<text x="735" y="715" transform="rotate(-78 735 715)" text-anchor="middle" dominant-baseline="central" font-size="13" fill="#4a4a4a" letter-spacing="1" font-family="Liberation Sans">Moseley Dr</text>
<text x="675" y="995" transform="rotate(-78 675 995)" text-anchor="middle" dominant-baseline="central" font-size="13" fill="#4a4a4a" letter-spacing="1" font-family="Liberation Sans">Moseley Dr</text>
<text x="627" y="1225" transform="rotate(-78 627 1225)" text-anchor="middle" dominant-baseline="central" font-size="13" fill="#4a4a4a" letter-spacing="1" font-family="Liberation Sans">Moseley Dr</text>
<text x="503" y="670" transform="rotate(-80 503 670)" text-anchor="middle" dominant-baseline="central" font-size="13" fill="#4a4a4a" letter-spacing="1" font-family="Liberation Sans">Colinwood Cir</text>
<text x="432" y="1080" transform="rotate(-82 432 1080)" text-anchor="middle" dominant-baseline="central" font-size="13" fill="#4a4a4a" letter-spacing="1" font-family="Liberation Sans">Colinwood Cir</text>
<text x="395" y="333" transform="rotate(33 395 333)" text-anchor="middle" dominant-baseline="central" font-size="13" fill="#4a4a4a" letter-spacing="1" font-family="Liberation Sans">nwood Cir</text>
<text x="372" y="570" transform="rotate(3 372 570)" text-anchor="middle" dominant-baseline="central" font-size="13" fill="#4a4a4a" letter-spacing="1" font-family="Liberation Sans">Rd</text>
<text x="382" y="795" transform="rotate(4 382 795)" text-anchor="middle" dominant-baseline="central" font-size="13" fill="#4a4a4a" letter-spacing="1" font-family="Liberation Sans">rd Dr</text>
<text x="1141" y="246" transform="rotate(70 1141 246)" text-anchor="middle" dominant-baseline="central" font-size="13" fill="#4a4a4a" letter-spacing="1" font-family="Liberation Sans">Hasty Rd</text>
<text x="1190" y="382" transform="rotate(70 1190 382)" text-anchor="middle" dominant-baseline="central" font-size="13" fill="#4a4a4a" letter-spacing="1" font-family="Liberation Sans">Hasty Rd</text>
<text x="1470" y="243" transform="rotate(88 1470 243)" text-anchor="middle" dominant-baseline="central" font-size="13" fill="#4a4a4a" letter-spacing="1" font-family="Liberation Sans">Neal Ln</text>
<text x="1504" y="633" transform="rotate(-62 1504 633)" text-anchor="middle" dominant-baseline="central" font-size="13" fill="#4a4a4a" letter-spacing="1" font-family="Liberation Sans">Neal Ln</text>
<text x="1191" y="995" transform="rotate(-78 1191 995)" text-anchor="middle" dominant-baseline="central" font-size="13" fill="#4a4a4a" letter-spacing="1" font-family="Liberation Sans">Greenbrier St</text>
<text x="1120" y="1284" transform="rotate(-62 1120 1284)" text-anchor="middle" dominant-baseline="central" font-size="13" fill="#4a4a4a" letter-spacing="1" font-family="Liberation Sans">Greenbrier St</text>
<text x="1623" y="482" transform="rotate(-76 1623 482)" text-anchor="middle" dominant-baseline="central" font-size="13" fill="#4a4a4a" letter-spacing="1" font-family="Liberation Sans">Parke Pl</text>
<text x="1767" y="440" transform="rotate(60 1767 440)" text-anchor="middle" dominant-baseline="central" font-size="13" fill="#4a4a4a" letter-spacing="1" font-family="Liberation Sans">Parke Pl</text>
<text x="1921" y="178" transform="rotate(-72 1921 178)" text-anchor="middle" dominant-baseline="central" font-size="13" fill="#4a4a4a" letter-spacing="1" font-family="Liberation Sans">Blue Farm Ests</text>
<text x="2030" y="786" transform="rotate(52 2030 786)" text-anchor="middle" dominant-baseline="central" font-size="13" fill="#4a4a4a" letter-spacing="1" font-family="Liberation Sans">Sycamore Ln</text>
<text x="2181" y="960" transform="rotate(52 2181 960)" text-anchor="middle" dominant-baseline="central" font-size="13" fill="#4a4a4a" letter-spacing="1" font-family="Liberation Sans">Sycamore Ln</text>
<text x="2395" y="1217" transform="rotate(52 2395 1217)" text-anchor="middle" dominant-baseline="central" font-size="13" fill="#4a4a4a" letter-spacing="1" font-family="Liberation Sans">Sycamore Ln</text>
<text x="1973" y="1311" transform="rotate(-40 1973 1311)" text-anchor="middle" dominant-baseline="central" font-size="13" fill="#4a4a4a" letter-spacing="1" font-family="Liberation Sans">Evergreen Ln</text>
<g transform="translate(2451,151)"><path d="M3 1.5 Q6 3 9 1.5 Q12 0 15 1.5 Q18 3 21 1.5 L22.5 3 Q24 12 19 19 Q15 22 12 23 Q9 22 5 19 Q0 12 1.5 3 Z" fill="#fff" stroke="#bbb" stroke-width="1"/><text x="12" y="15.5" font-size="10" font-weight="bold" text-anchor="middle" fill="#555" font-family="Liberation Sans">15</text></g>
<g transform="translate(2173,390)"><path d="M3 1.5 Q6 3 9 1.5 Q12 0 15 1.5 Q18 3 21 1.5 L22.5 3 Q24 12 19 19 Q15 22 12 23 Q9 22 5 19 Q0 12 1.5 3 Z" fill="#fff" stroke="#bbb" stroke-width="1"/><text x="12" y="15.5" font-size="10" font-weight="bold" text-anchor="middle" fill="#555" font-family="Liberation Sans">15</text></g>
<g transform="translate(1916,607)"><path d="M3 1.5 Q6 3 9 1.5 Q12 0 15 1.5 Q18 3 21 1.5 L22.5 3 Q24 12 19 19 Q15 22 12 23 Q9 22 5 19 Q0 12 1.5 3 Z" fill="#fff" stroke="#bbb" stroke-width="1"/><text x="12" y="15.5" font-size="10" font-weight="bold" text-anchor="middle" fill="#555" font-family="Liberation Sans">15</text></g>
<g transform="translate(1637,863)"><path d="M3 1.5 Q6 3 9 1.5 Q12 0 15 1.5 Q18 3 21 1.5 L22.5 3 Q24 12 19 19 Q15 22 12 23 Q9 22 5 19 Q0 12 1.5 3 Z" fill="#fff" stroke="#bbb" stroke-width="1"/><text x="12" y="15.5" font-size="10" font-weight="bold" text-anchor="middle" fill="#555" font-family="Liberation Sans">15</text></g>
<g transform="translate(1457,1180)"><path d="M3 1.5 Q6 3 9 1.5 Q12 0 15 1.5 Q18 3 21 1.5 L22.5 3 Q24 12 19 19 Q15 22 12 23 Q9 22 5 19 Q0 12 1.5 3 Z" fill="#fff" stroke="#bbb" stroke-width="1"/><text x="12" y="15.5" font-size="10" font-weight="bold" text-anchor="middle" fill="#555" font-family="Liberation Sans">15</text></g>
<rect x="365" y="131" width="2195" height="1" fill="#d8eef8"/>
</svg>
<div class="abs" style="left:373px;top:137px;width:30px;height:60px;background:#565656;border-radius:4px"></div>
<svg class="abs" style="left:380px;top:143px" width="16" height="16"><path d="M8 1v14M1 8h14" stroke="#fff" stroke-width="2"/></svg>
<svg class="abs" style="left:381px;top:178px" width="14" height="4"><path d="M0 2h14" stroke="#fff" stroke-width="2"/></svg>
<div class="abs" style="left:373px;top:207px;width:30px;height:30px;background:#565656;border-radius:4px"></div>
<svg class="abs" style="left:378px;top:212px" width="20" height="18"><path d="M10 1L1 9.5h2.5V17h5v-5h3v5h5V9.5H19L15.5 6V2h-2v2.2z" fill="#f2f2f2"/></svg>
<div class="abs" style="left:373px;top:247px;width:30px;height:30px;background:#565656;border-radius:4px"></div>
<svg class="abs" style="left:377px;top:251px" width="22" height="22"><circle cx="11" cy="11" r="9" stroke="#fff" stroke-width="1.6" fill="none"/><path d="M11 1v4M11 17v4M1 11h4M17 11h4" stroke="#fff" stroke-width="1.6"/></svg>
<div class="abs" style="left:410px;top:136px;width:274px;height:34px;background:#fff;border:1px solid #666;border-radius:4px"></div>
<div class="abs" style="left:443px;top:137px;width:1px;height:32px;background:#555"></div>
<div class="abs" style="left:650px;top:137px;width:1px;height:32px;background:#555"></div>
<svg class="abs" style="left:420px;top:149px" width="14" height="8"><path d="M0 0h13L6.5 7z" fill="#444"/></svg>
<div class="abs" style="left:456px;top:145px;font-size:14px;color:#8a8a8a;white-space:nowrap">Search for a location</div>
<svg class="abs" style="left:657px;top:144px" width="20" height="20"><circle cx="7.5" cy="7.5" r="5.5" stroke="#333" stroke-width="1.8" fill="none"/><path d="M11.5 11.5l5 5" stroke="#333" stroke-width="2.4"/></svg>
<div class="abs" style="left:411px;top:177px;width:38px;height:38px;background:#565656;border-radius:4px"></div>
<div class="abs" style="left:461px;top:177px;width:38px;height:38px;background:#565656;border-radius:4px"></div>
<div class="abs" style="left:511px;top:177px;width:38px;height:38px;background:#565656;border-radius:4px"></div>
<svg class="abs" style="left:419px;top:185px" width="22" height="22"><path d="M2 6.5L4 3l2 3.5z" fill="#fff"/><rect x="2" y="10" width="4" height="4" fill="#fff"/><circle cx="4" cy="17.5" r="2" fill="#fff"/><path d="M8 5h11M8 12h11M8 17.5h11" stroke="#fff" stroke-width="2"/></svg>
<svg class="abs" style="left:467px;top:183px" width="26" height="26"><path d="M4 18.5L18 4.5 22 8.5 8 22.5z" fill="#fff"/><path d="M8 15.5l1.5 1.5M10.5 13l1.5 1.5M13 10.5l1.5 1.5M15.5 8l1.5 1.5" stroke="#565656" stroke-width="1"/></svg>
<svg class="abs" style="left:519px;top:185px" width="22" height="22"><rect x="1" y="1" width="9" height="9" fill="#fff"/><rect x="12" y="1" width="9" height="9" fill="#fff"/><rect x="1" y="12" width="9" height="9" fill="#fff"/><rect x="12" y="12" width="9" height="9" fill="#fff"/></svg>
<svg class="abs" style="left:374px;top:1324px" width="130" height="10"><path d="M2 8V2.5H124V8" stroke="#444" stroke-width="2" fill="none"/></svg>
<div class="abs" style="left:491px;top:1330px;font-size:11px;color:#5a5a6a;font-weight:bold;white-space:nowrap">200ft</div>
<div class="abs" style="left:375px;top:1346px;width:148px;height:18px;background:#7b7b73"></div>
<div class="abs" style="left:391px;top:1346px;width:1px;height:18px;background:#9a9a92"></div>
<svg class="abs" style="left:377px;top:1348px" width="13" height="13"><circle cx="6.5" cy="6.5" r="1.5" fill="#fff"/><path d="M6.5 0v3M6.5 10v3M0 6.5h3M10 6.5h3" stroke="#fff" stroke-width="1"/></svg>
<div class="abs" style="left:397px;top:1348px;font-size:11.2px;color:#fff;white-space:nowrap">-79.497 34.743 Degrees</div>
<div class="abs" style="left:1497px;top:1349px;width:985px;height:14px;background:rgba(255,255,255,0.85)"></div>
<div class="abs" style="left:1502px;top:1348px;font-size:13.2px;color:#333;white-space:nowrap">Esri Community Maps Contributors, State of North Carolina DOT, &copy; OpenStreetMap, Microsoft, Esri, TomTom, Garmin, SafeGraph, GeoTechnologies, Inc, METI/NAS...</div>
<div class="abs" style="left:1433px;top:1353px;width:59px;height:15px;background:#444;border-radius:4px 4px 0 0"></div>
<svg class="abs" style="left:1457px;top:1356px" width="10" height="6"><path d="M0 6L5 0l5 6z" fill="#ccc"/></svg>
<svg class="abs" style="left:2486px;top:1322px" width="74" height="46"><defs><filter id="es" x="-20%" y="-20%" width="140%" height="140%"><feDropShadow dx="0" dy="0" stdDeviation="1.2" flood-color="#555" flood-opacity="0.7"/></filter></defs><g filter="url(#es)"><text x="8" y="12" font-family="Liberation Sans" font-size="7.5" font-weight="bold" fill="#fafafa">POWERED BY</text><circle cx="64" cy="9" r="2.8" fill="#fafafa"/><text x="6" y="38" font-family="Liberation Sans" font-size="33" font-weight="bold" letter-spacing="-1" fill="#f4f4f4">esri</text></g><path d="M61 32v10l3-3 2.5 5 1.5-.8-2.5-5h4z" fill="#fff" stroke="#444" stroke-width="1"/></svg>
<div class="abs" style="left:1204px;top:575px;width:270px;height:357px;background:#fff;border-radius:4px;box-shadow:0 1px 4px rgba(0,0,0,0.3)"></div>
<svg class="abs" style="left:1193px;top:743px" width="12" height="20"><path d="M12 0L1 9.5 12 20z" fill="#fff"/></svg>
<div class="abs" style="left:1204px;top:575px;width:270px;height:20px;background:#389ad6;border-radius:4px 4px 0 0"></div>
<div class="abs" style="left:1209px;top:578px;font-size:12.2px;color:#fff;white-space:nowrap">(1 of 4)</div>
<svg class="abs" style="left:1418px;top:580px" width="9" height="10"><path d="M0 0l8.5 5L0 10z" fill="#fff"/></svg>
<svg class="abs" style="left:1440px;top:579px" width="12" height="11"><rect x="1" y="1" width="10" height="9" stroke="#fff" stroke-width="1.3" fill="none"/><rect x="1" y="1" width="10" height="2.5" fill="#fff"/></svg>
<svg class="abs" style="left:1458px;top:579px" width="12" height="12"><path d="M1 1l10 10M11 1L1 11" stroke="#fff" stroke-width="2"/></svg>
<div class="abs" style="left:1214px;top:604px;font-size:12.5px;font-weight:bold;color:#222;white-space:nowrap">Parcel Number: 010216 01007</div>
<div class="abs" style="left:1214px;top:625px;width:248px;height:1px;background:#222"></div>
<div class="abs" style="left:1214px;top:646px;font-size:12.5px;color:#333;white-space:nowrap;-webkit-text-stroke:0.35px #333">Property Information</div>
<div class="abs" style="left:1216px;top:664px;width:149px;height:13px;background:#f0f0f0"></div>
<div class="abs" style="left:1368px;top:664px;width:87px;height:13px;background:#f0f0f0"></div>
<div class="abs prow" style="left:1216px;top:663px">PINID</div>
<div class="abs" style="left:1368px;top:664px;width:77px;height:13px;background:#2c5fc0"></div>
<div class="abs prow" style="left:1368px;top:663px;color:#fff">01021601007</div>
<div class="abs prow" style="left:1216px;top:679px">PropertyAd</div>
<div class="abs prow" style="left:1368px;top:679px"></div>
<div class="abs" style="left:1216px;top:696px;width:149px;height:13px;background:#f0f0f0"></div>
<div class="abs" style="left:1368px;top:696px;width:87px;height:13px;background:#f0f0f0"></div>
<div class="abs prow" style="left:1216px;top:695px">Legal Description</div>
<div class="abs prow" style="left:1368px;top:695px;letter-spacing:-0.65px">#7 PINE ACRES</div>
<div class="abs prow" style="left:1216px;top:711px">Deed Info</div>
<div class="abs prow" style="left:1368px;top:711px;color:#4a6d96;text-decoration:underline">View</div>
<div class="abs" style="left:1216px;top:728px;width:149px;height:13px;background:#f0f0f0"></div>
<div class="abs" style="left:1368px;top:728px;width:87px;height:13px;background:#f0f0f0"></div>
<div class="abs prow" style="left:1216px;top:727px">Tax Card</div>
<div class="abs prow" style="left:1368px;top:727px;color:#4a6d96;text-decoration:underline">View</div>
<div class="abs prow" style="left:1216px;top:743px">Account Number</div>
<div class="abs prow" style="left:1368px;top:743px">903683.000000</div>
<div class="abs" style="left:1216px;top:760px;width:149px;height:13px;background:#f0f0f0"></div>
<div class="abs" style="left:1368px;top:760px;width:87px;height:13px;background:#f0f0f0"></div>
<div class="abs prow" style="left:1216px;top:759px">Acres</div>
<div class="abs prow" style="left:1368px;top:759px">0.459000</div>
<div class="abs prow" style="left:1216px;top:775px">County Tax Code</div>
<div class="abs prow" style="left:1368px;top:775px">C</div>
<div class="abs" style="left:1216px;top:792px;width:149px;height:13px;background:#f0f0f0"></div>
<div class="abs" style="left:1368px;top:792px;width:87px;height:13px;background:#f0f0f0"></div>
<div class="abs prow" style="left:1216px;top:791px">Exemption Code</div>
<div class="abs prow" style="left:1368px;top:791px"></div>
<div class="abs prow" style="left:1216px;top:807px">Fire Tax Code</div>
<div class="abs prow" style="left:1368px;top:807px"></div>
<div class="abs" style="left:1216px;top:824px;width:149px;height:13px;background:#f0f0f0"></div>
<div class="abs" style="left:1368px;top:824px;width:87px;height:13px;background:#f0f0f0"></div>
<div class="abs prow" style="left:1216px;top:823px">Deed Date</div>
<div class="abs prow" style="left:1368px;top:823px">20141010</div>
<div class="abs prow" style="left:1216px;top:839px">Deed Book #</div>
<div class="abs prow" style="left:1368px;top:839px">EST14</div>
<div class="abs" style="left:1216px;top:856px;width:149px;height:13px;background:#f0f0f0"></div>
<div class="abs" style="left:1368px;top:856px;width:87px;height:13px;background:#f0f0f0"></div>
<div class="abs prow" style="left:1216px;top:855px">Deed Page #</div>
<div class="abs prow" style="left:1368px;top:855px">0.000000</div>
<div class="abs prow" style="left:1216px;top:871px">Deed Stamps</div>
<div class="abs prow" style="left:1368px;top:871px">0</div>
<div class="abs" style="left:1468px;top:595px;width:5px;height:315px;background:#f1f1f1"></div>
<div class="abs" style="left:1468px;top:596px;width:5px;height:148px;background:#a8a8a8;border-radius:2px"></div>
<div class="abs" style="left:1214px;top:912px;font-size:12.5px;color:#4a6d96;text-decoration:underline;white-space:nowrap">Zoom to</div>
<svg class="abs" style="left:1437px;top:917px" width="18" height="6"><circle cx="3" cy="3" r="2" fill="#666"/><circle cx="9" cy="3" r="2" fill="#666"/><circle cx="15" cy="3" r="2" fill="#666"/></svg>
<div class="abs" style="left:0;top:1368px;width:2560px;height:24px;background:#389ad6;color:#fff;font-size:12.3px;text-align:center;line-height:24px">All rights reserved</div>
</body></html>
